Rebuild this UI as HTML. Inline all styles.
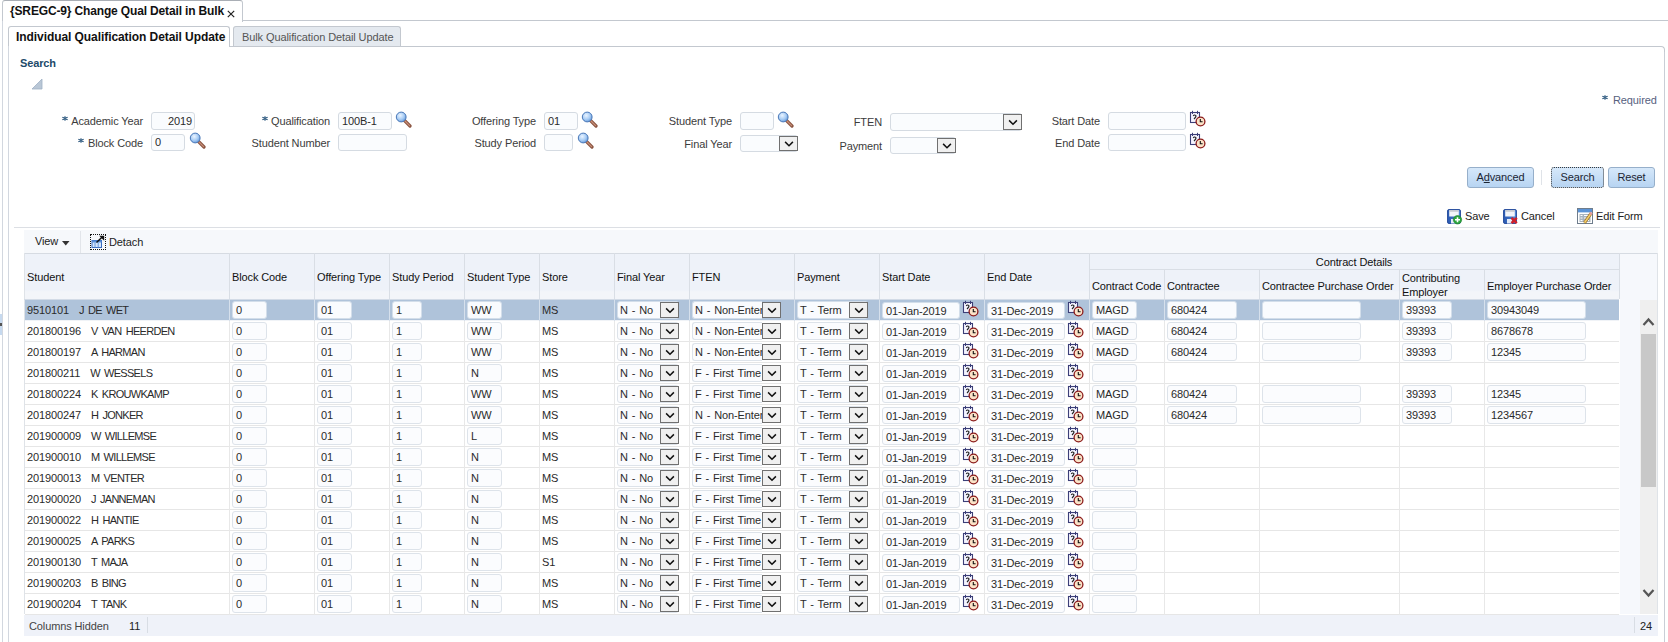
<!DOCTYPE html><html><head><meta charset="utf-8"><style>
*{box-sizing:border-box;margin:0;padding:0}
html,body{width:1668px;height:642px;overflow:hidden;background:#fff}
body{position:relative;font-family:"Liberation Sans",sans-serif;font-size:11px;color:#2a2a2a;letter-spacing:-0.12px}
.ab{position:absolute}
.t{position:absolute;white-space:nowrap;line-height:13px}
.lbl{position:absolute;white-space:nowrap;line-height:13px;color:#3c3c3c;text-align:right}
.star{color:#3a78a8}
.inp{position:absolute;border:1px solid #d5dbe2;border-radius:3px;background:#fafcfe}
.sel{position:absolute;border:1px solid #d5dbe2;border-radius:3px;background:#fafcfe}
.btn{position:absolute;border:1px solid #707070;background:#f0f0f0;border-radius:0}
.hl{position:absolute;height:1px}
.vl{position:absolute;width:1px}
.cbtn{position:absolute;border:1px solid #96afca;border-radius:3px;background:linear-gradient(#d6e8fa,#b7d4f2);color:#1c2533;text-align:center;line-height:19px;font-size:11px}
.hdr{position:absolute;white-space:nowrap;line-height:13px;color:#111}
.cell{position:absolute;white-space:nowrap;line-height:13px;color:#2a2a2a}
.ci{position:absolute;white-space:nowrap;overflow:hidden;border:1px solid #dde3ea;border-radius:3px;background:#fbfcfe;height:17px}
.sr .ci{background:#f9fbfe;border-color:#d3deea}
</style></head><body>
<div class="ab" style="left:2px;top:0;width:241px;height:22px;border:1px solid #c3c8cf;border-bottom:none;border-radius:3px 3px 0 0;border-top-color:#a9aeb5;background:#fff"></div>
<div class="hl" style="left:242px;top:20px;width:1426px;background:#c3c8cf"></div>
<div class="vl" style="left:2px;top:21px;height:621px;background:#d2d7df"></div>
<div class="t" style="left:10px;top:5px;font-weight:bold;font-size:12px;color:#111;letter-spacing:-0.15px">{SREGC-9} Change Qual Detail in Bulk</div>
<svg class="ab" style="left:227px;top:10px" width="8" height="8"><path d="M0.8 0.8 L7.2 7.2 M7.2 0.8 L0.8 7.2" stroke="#222" stroke-width="1.2"/></svg>
<div class="ab" style="left:8px;top:26px;width:222px;height:21px;border:1px solid #c3c8cf;border-bottom:none;border-radius:3px 3px 0 0;background:#fff"></div>
<div class="ab" style="left:233px;top:26px;width:168px;height:21px;border:1px solid #c3c8cf;border-bottom:none;border-radius:3px 3px 0 0;background:#e4e9ef"></div>
<div class="hl" style="left:229px;top:46px;width:1432px;background:#c3c8cf"></div>
<div class="ab" style="left:1656px;top:46px;width:9px;height:10px;border-top:1px solid #c3c8cf;border-right:1px solid #c3c8cf;border-radius:0 4px 0 0"></div>
<div class="vl" style="left:1664px;top:52px;height:590px;background:#c9ced6"></div>
<div class="vl" style="left:8px;top:46px;height:596px;background:#d2d7df"></div>
<div class="t" style="left:16px;top:31px;font-weight:bold;font-size:12px;color:#111;letter-spacing:-0.07px">Individual Qualification Detail Update</div>
<div class="t" style="left:242px;top:31px;color:#555;letter-spacing:-0.1px">Bulk Qualification Detail Update</div>
<div class="t" style="left:20px;top:57px;font-weight:bold;color:#1d4a6a">Search</div>
<svg class="ab" style="left:31px;top:78px" width="12" height="12"><path d="M11 1 L11 11 L1 11 Z" fill="#b9c7d6" stroke="#9fb1c5" stroke-width="0.8"/></svg>
<svg class="ab" style="left:1602px;top:95px" width="6" height="5" viewBox="0 0 6 5"><path d="M3 0.2 V4.8 M0.4 1.2 L5.6 3.8 M0.4 3.8 L5.6 1.2" stroke="#24527a" stroke-width="1.1"/></svg>
<div class="t" style="left:1613px;top:94px;color:#566180">Required</div>
<div class="lbl" style="right:1525px;top:115px"><svg width="6" height="5" style="margin-right:3.5px;vertical-align:4.5px" viewBox="0 0 6 5"><path d="M3 0.2 V4.8 M0.4 1.2 L5.6 3.8 M0.4 3.8 L5.6 1.2" stroke="#24527a" stroke-width="1.1"/></svg>Academic Year</div>
<div class="inp" style="left:151px;top:112px;width:44px;height:18px;line-height:16px;padding-right:2px;text-align:right;color:#2a2a2a">2019</div>
<div class="lbl" style="right:1525px;top:137px"><svg width="6" height="5" style="margin-right:3.5px;vertical-align:4.5px" viewBox="0 0 6 5"><path d="M3 0.2 V4.8 M0.4 1.2 L5.6 3.8 M0.4 3.8 L5.6 1.2" stroke="#24527a" stroke-width="1.1"/></svg>Block Code</div>
<div class="inp" style="left:151px;top:134px;width:34px;height:17px;line-height:15px;padding-left:3px;color:#2a2a2a">0</div>
<svg class="ab" style="left:189px;top:132px" width="17" height="17" viewBox="0 0 17 17"><defs><radialGradient id="lg1" cx="40%" cy="35%" r="65%"><stop offset="0" stop-color="#eaf4ff"/><stop offset="0.6" stop-color="#a9cdf5"/><stop offset="1" stop-color="#6d9fdc"/></radialGradient></defs><line x1="9.5" y1="9.5" x2="15" y2="15" stroke="#8a5440" stroke-width="3.2" stroke-linecap="round"/><line x1="10" y1="10" x2="14.6" y2="14.6" stroke="#c9907a" stroke-width="1.2" stroke-linecap="round"/><circle cx="6.2" cy="6" r="4.9" fill="url(#lg1)" stroke="#4a78b8" stroke-width="1"/></svg>
<div class="lbl" style="right:1338px;top:115px"><svg width="6" height="5" style="margin-right:3.5px;vertical-align:4.5px" viewBox="0 0 6 5"><path d="M3 0.2 V4.8 M0.4 1.2 L5.6 3.8 M0.4 3.8 L5.6 1.2" stroke="#24527a" stroke-width="1.1"/></svg>Qualification</div>
<div class="inp" style="left:338px;top:112px;width:54px;height:18px;line-height:16px;padding-left:3px;color:#2a2a2a">100B-1</div>
<svg class="ab" style="left:395px;top:111px" width="17" height="17" viewBox="0 0 17 17"><defs><radialGradient id="lg2" cx="40%" cy="35%" r="65%"><stop offset="0" stop-color="#eaf4ff"/><stop offset="0.6" stop-color="#a9cdf5"/><stop offset="1" stop-color="#6d9fdc"/></radialGradient></defs><line x1="9.5" y1="9.5" x2="15" y2="15" stroke="#8a5440" stroke-width="3.2" stroke-linecap="round"/><line x1="10" y1="10" x2="14.6" y2="14.6" stroke="#c9907a" stroke-width="1.2" stroke-linecap="round"/><circle cx="6.2" cy="6" r="4.9" fill="url(#lg2)" stroke="#4a78b8" stroke-width="1"/></svg>
<div class="lbl" style="right:1338px;top:137px">Student Number</div>
<div class="inp" style="left:338px;top:134px;width:69px;height:17px;line-height:15px;padding-left:3px;color:#2a2a2a"></div>
<div class="lbl" style="right:1132px;top:115px">Offering Type</div>
<div class="inp" style="left:544px;top:112px;width:34px;height:18px;line-height:16px;padding-left:3px;color:#2a2a2a">01</div>
<svg class="ab" style="left:581px;top:111px" width="17" height="17" viewBox="0 0 17 17"><defs><radialGradient id="lg3" cx="40%" cy="35%" r="65%"><stop offset="0" stop-color="#eaf4ff"/><stop offset="0.6" stop-color="#a9cdf5"/><stop offset="1" stop-color="#6d9fdc"/></radialGradient></defs><line x1="9.5" y1="9.5" x2="15" y2="15" stroke="#8a5440" stroke-width="3.2" stroke-linecap="round"/><line x1="10" y1="10" x2="14.6" y2="14.6" stroke="#c9907a" stroke-width="1.2" stroke-linecap="round"/><circle cx="6.2" cy="6" r="4.9" fill="url(#lg3)" stroke="#4a78b8" stroke-width="1"/></svg>
<div class="lbl" style="right:1132px;top:137px">Study Period</div>
<div class="inp" style="left:544px;top:134px;width:29px;height:17px;line-height:15px;padding-left:3px;color:#2a2a2a"></div>
<svg class="ab" style="left:577px;top:132px" width="17" height="17" viewBox="0 0 17 17"><defs><radialGradient id="lg4" cx="40%" cy="35%" r="65%"><stop offset="0" stop-color="#eaf4ff"/><stop offset="0.6" stop-color="#a9cdf5"/><stop offset="1" stop-color="#6d9fdc"/></radialGradient></defs><line x1="9.5" y1="9.5" x2="15" y2="15" stroke="#8a5440" stroke-width="3.2" stroke-linecap="round"/><line x1="10" y1="10" x2="14.6" y2="14.6" stroke="#c9907a" stroke-width="1.2" stroke-linecap="round"/><circle cx="6.2" cy="6" r="4.9" fill="url(#lg4)" stroke="#4a78b8" stroke-width="1"/></svg>
<div class="lbl" style="right:936px;top:115px">Student Type</div>
<div class="inp" style="left:740px;top:112px;width:34px;height:18px;line-height:16px;padding-left:3px;color:#2a2a2a"></div>
<svg class="ab" style="left:777px;top:111px" width="17" height="17" viewBox="0 0 17 17"><defs><radialGradient id="lg5" cx="40%" cy="35%" r="65%"><stop offset="0" stop-color="#eaf4ff"/><stop offset="0.6" stop-color="#a9cdf5"/><stop offset="1" stop-color="#6d9fdc"/></radialGradient></defs><line x1="9.5" y1="9.5" x2="15" y2="15" stroke="#8a5440" stroke-width="3.2" stroke-linecap="round"/><line x1="10" y1="10" x2="14.6" y2="14.6" stroke="#c9907a" stroke-width="1.2" stroke-linecap="round"/><circle cx="6.2" cy="6" r="4.9" fill="url(#lg5)" stroke="#4a78b8" stroke-width="1"/></svg>
<div class="lbl" style="right:936px;top:138px">Final Year</div>
<div class="sel" style="left:740px;top:135px;width:58px;height:17px"></div>
<div class="btn" style="left:779px;top:136px;width:19px;height:15px"><svg width="17" height="13" style="position:absolute;left:0;top:0"><polyline points="5.1,4.9 9.0,8.7 12.9,4.9" fill="none" stroke="#111" stroke-width="1.5"/></svg></div>
<div class="lbl" style="right:786px;top:116px">FTEN</div>
<div class="sel" style="left:890px;top:113px;width:132px;height:18px"></div>
<div class="btn" style="left:1003px;top:114px;width:19px;height:16px"><svg width="17" height="14" style="position:absolute;left:0;top:0"><polyline points="5.1,5.4 9.0,9.2 12.9,5.4" fill="none" stroke="#111" stroke-width="1.5"/></svg></div>
<div class="lbl" style="right:786px;top:140px">Payment</div>
<div class="sel" style="left:890px;top:137px;width:66px;height:17px"></div>
<div class="btn" style="left:937px;top:138px;width:19px;height:15px"><svg width="17" height="13" style="position:absolute;left:0;top:0"><polyline points="5.1,4.9 9.0,8.7 12.9,4.9" fill="none" stroke="#111" stroke-width="1.5"/></svg></div>
<div class="lbl" style="right:568px;top:115px">Start Date</div>
<div class="inp" style="left:1108px;top:112px;width:78px;height:18px;line-height:16px;padding-left:3px;color:#2a2a2a"></div>
<svg class="ab" style="left:1189px;top:110px" width="17" height="17" viewBox="0 0 17 17"><rect x="1.5" y="2.5" width="9" height="10" fill="#f4f4ff" stroke="#3c3f78" stroke-width="1.1"/><line x1="3.5" y1="0.8" x2="3.5" y2="4" stroke="#3c3f78" stroke-width="1"/><line x1="8.5" y1="0.8" x2="8.5" y2="4" stroke="#3c3f78" stroke-width="1"/><path d="M4.2 6 Q5.5 4.3 6.9 5.6 Q7.4 6.8 5 9" fill="none" stroke="#222" stroke-width="1.1"/><circle cx="11.5" cy="11.5" r="4.4" fill="#fbe3c8" stroke="#8b1a1a" stroke-width="1.3"/><path d="M11.3 9 V11.8 H13.6" fill="none" stroke="#111" stroke-width="1.1"/></svg>
<div class="lbl" style="right:568px;top:137px">End Date</div>
<div class="inp" style="left:1108px;top:134px;width:78px;height:17px;line-height:15px;padding-left:3px;color:#2a2a2a"></div>
<svg class="ab" style="left:1189px;top:132px" width="17" height="17" viewBox="0 0 17 17"><rect x="1.5" y="2.5" width="9" height="10" fill="#f4f4ff" stroke="#3c3f78" stroke-width="1.1"/><line x1="3.5" y1="0.8" x2="3.5" y2="4" stroke="#3c3f78" stroke-width="1"/><line x1="8.5" y1="0.8" x2="8.5" y2="4" stroke="#3c3f78" stroke-width="1"/><path d="M4.2 6 Q5.5 4.3 6.9 5.6 Q7.4 6.8 5 9" fill="none" stroke="#222" stroke-width="1.1"/><circle cx="11.5" cy="11.5" r="4.4" fill="#fbe3c8" stroke="#8b1a1a" stroke-width="1.3"/><path d="M11.3 9 V11.8 H13.6" fill="none" stroke="#111" stroke-width="1.1"/></svg>
<div class="cbtn" style="left:1467px;top:167px;width:67px;height:21px">A<u>d</u>vanced</div>
<div class="vl" style="left:1541px;top:170px;height:15px;background:#dfe3e8"></div>
<div class="cbtn" style="left:1551px;top:167px;width:53px;height:21px;border:1px dotted #3a3a3a">Search</div>
<div class="cbtn" style="left:1608px;top:167px;width:47px;height:21px">Reset</div>
<svg class="ab" style="left:1447px;top:209px" width="16" height="16" viewBox="0 0 16 16"><defs><linearGradient id="fgsave" x1="0" x2="1"><stop offset="0" stop-color="#2a58b0"/><stop offset="1" stop-color="#4f86d6"/></linearGradient></defs><rect x="0.5" y="0.5" width="13" height="14" rx="1.5" fill="url(#fgsave)" stroke="#23489a" stroke-width="0.9"/><rect x="2.2" y="1.2" width="9.6" height="6.3" fill="#f2f5fa"/><rect x="2.2" y="1.2" width="9.6" height="1.5" fill="#c4c7cc"/><rect x="4" y="10" width="5" height="4.5" fill="#e4ecf8"/><circle cx="10.5" cy="10.8" r="4.2" fill="#2aa43c" stroke="#1d7f2c" stroke-width="0.6"/><path d="M10.5 8.3 V13.3 M8 10.8 H13" stroke="#fff" stroke-width="1.6"/></svg>
<div class="t" style="left:1465px;top:210px;color:#222">Save</div>
<svg class="ab" style="left:1503px;top:209px" width="16" height="16" viewBox="0 0 16 16"><defs><linearGradient id="fgcancel" x1="0" x2="1"><stop offset="0" stop-color="#2a58b0"/><stop offset="1" stop-color="#4f86d6"/></linearGradient></defs><rect x="0.5" y="0.5" width="13" height="14" rx="1.5" fill="url(#fgcancel)" stroke="#23489a" stroke-width="0.9"/><rect x="2.2" y="1.2" width="9.6" height="6.3" fill="#f2f5fa"/><rect x="2.2" y="1.2" width="9.6" height="1.5" fill="#c4c7cc"/><rect x="4" y="10" width="5" height="4.5" fill="#e4ecf8"/><path d="M8.5 8.8 L13.8 14.2 M13.8 8.8 L8.5 14.2" stroke="#d0202a" stroke-width="2.4"/></svg>
<div class="t" style="left:1521px;top:210px;color:#222">Cancel</div>
<svg class="ab" style="left:1577px;top:208px" width="17" height="17" viewBox="0 0 17 17"><rect x="0.5" y="0.5" width="15" height="15" fill="#fff" stroke="#6f7d8c"/><rect x="1" y="1" width="14" height="3.4" fill="#5b93d6"/><rect x="2.5" y="6" width="11" height="8" fill="#a8b3be"/><path d="M3.5 7.5 H5.5 M7 7.5 H12 M3.5 10 H5.5 M7 10 H12 M3.5 12.5 H5.5 M7 12.5 H12" stroke="#fff" stroke-width="1.2"/><path d="M7.5 14.8 L14.2 5.2" stroke="#9a6a20" stroke-width="3"/><path d="M7.5 14.8 L14.2 5.2" stroke="#f2cf6a" stroke-width="1.6"/><path d="M13.2 6.6 L14.6 4.6" stroke="#e59a9a" stroke-width="2.6"/></svg>
<div class="t" style="left:1596px;top:210px;color:#222">Edit Form</div>
<div class="hl" style="left:14px;top:227px;width:1646px;background:#dcdfe4"></div>
<div class="ab" style="left:24px;top:230px;width:1634px;height:23px;background:#f6f8fb"></div>
<div class="t" style="left:35px;top:235px;color:#222">View</div>
<svg class="ab" style="left:62px;top:241px" width="8" height="5"><path d="M0 0 H7.5 L3.75 4.5 Z" fill="#333"/></svg>
<div class="vl" style="left:80px;top:231px;height:22px;background:#e2e5ea"></div>
<div class="ab" style="left:90px;top:234px;width:16px;height:16px;border:1px dotted #111"></div>
<svg class="ab" style="left:90px;top:234px" width="16" height="16" viewBox="0 0 16 16"><rect x="2" y="6.5" width="9.5" height="7" fill="#d6e6fb" stroke="#3a6cc0" stroke-width="1"/><rect x="2" y="6.5" width="9.5" height="2" fill="#5a8fd8"/><path d="M5 8.5 V13.5 M8.2 8.5 V13.5" stroke="#5a8fd8" stroke-width="0.9"/><path d="M6.5 8.5 L12.5 2.8" stroke="#111" stroke-width="1.5"/><path d="M9.2 1.8 L14.2 1.8 L14.2 6.8 Z" fill="#111"/></svg>
<div class="t" style="left:109px;top:236px;color:#222">Detach</div>
<div class="ab" style="left:24px;top:253px;width:1596px;height:46px;background:linear-gradient(#eef2f9 0,#eef2f9 80%,#f3f5f9 84%,#f3f5f9 100%);border-top:1px solid #d6dbe2"></div>
<div class="ab" style="left:1620px;top:253px;width:38px;height:361px;background:#f6f8fc;border-top:1px solid #d6dbe2"></div>
<div class="vl" style="left:24px;top:253px;height:361px;background:#dfe3e8"></div>
<div class="vl" style="left:1657px;top:253px;height:361px;background:#dfe3e8"></div>
<div class="vl" style="left:229px;top:253px;height:46px;background:#d9dee5"></div>
<div class="vl" style="left:314px;top:253px;height:46px;background:#d9dee5"></div>
<div class="vl" style="left:389px;top:253px;height:46px;background:#d9dee5"></div>
<div class="vl" style="left:464px;top:253px;height:46px;background:#d9dee5"></div>
<div class="vl" style="left:539px;top:253px;height:46px;background:#d9dee5"></div>
<div class="vl" style="left:614px;top:253px;height:46px;background:#d9dee5"></div>
<div class="vl" style="left:689px;top:253px;height:46px;background:#d9dee5"></div>
<div class="vl" style="left:794px;top:253px;height:46px;background:#d9dee5"></div>
<div class="vl" style="left:879px;top:253px;height:46px;background:#d9dee5"></div>
<div class="vl" style="left:984px;top:253px;height:46px;background:#d9dee5"></div>
<div class="vl" style="left:1089px;top:253px;height:46px;background:#d9dee5"></div>
<div class="vl" style="left:1164px;top:269px;height:30px;background:#d9dee5"></div>
<div class="vl" style="left:1259px;top:269px;height:30px;background:#d9dee5"></div>
<div class="vl" style="left:1399px;top:269px;height:30px;background:#d9dee5"></div>
<div class="vl" style="left:1484px;top:269px;height:30px;background:#d9dee5"></div>
<div class="vl" style="left:1619px;top:253px;height:46px;background:#d9dee5"></div>
<div class="hl" style="left:1089px;top:269px;width:530px;background:#d9dee5"></div>
<div class="hl" style="left:24px;top:299px;width:1595px;background:#d3dbe6"></div>
<div class="hdr" style="left:27px;top:271px">Student</div>
<div class="hdr" style="left:232px;top:271px">Block Code</div>
<div class="hdr" style="left:317px;top:271px">Offering Type</div>
<div class="hdr" style="left:392px;top:271px">Study Period</div>
<div class="hdr" style="left:467px;top:271px">Student Type</div>
<div class="hdr" style="left:542px;top:271px">Store</div>
<div class="hdr" style="left:617px;top:271px">Final Year</div>
<div class="hdr" style="left:692px;top:271px">FTEN</div>
<div class="hdr" style="left:797px;top:271px">Payment</div>
<div class="hdr" style="left:882px;top:271px">Start Date</div>
<div class="hdr" style="left:987px;top:271px">End Date</div>
<div class="hdr" style="left:1089px;width:530px;text-align:center;top:256px">Contract Details</div>
<div class="hdr" style="left:1092px;top:280px">Contract Code</div>
<div class="hdr" style="left:1167px;top:280px">Contractee</div>
<div class="hdr" style="left:1262px;top:280px">Contractee Purchase Order</div>
<div class="hdr" style="left:1487px;top:280px">Employer Purchase Order</div>
<div class="hdr" style="left:1402px;top:272px;line-height:13.5px">Contributing<br>Employer</div>
<div class="sr ab" style="left:25px;top:300px;width:1594px;height:21px;background:#afc3da">
<div class="hl" style="left:0;top:20px;width:1594px;background:#f0f3f7"></div>
<div class="vl" style="left:204px;top:0;height:21px;background:#d6e0ec"></div>
<div class="vl" style="left:289px;top:0;height:21px;background:#d6e0ec"></div>
<div class="vl" style="left:364px;top:0;height:21px;background:#d6e0ec"></div>
<div class="vl" style="left:439px;top:0;height:21px;background:#d6e0ec"></div>
<div class="vl" style="left:514px;top:0;height:21px;background:#d6e0ec"></div>
<div class="vl" style="left:589px;top:0;height:21px;background:#d6e0ec"></div>
<div class="vl" style="left:664px;top:0;height:21px;background:#d6e0ec"></div>
<div class="vl" style="left:769px;top:0;height:21px;background:#d6e0ec"></div>
<div class="vl" style="left:854px;top:0;height:21px;background:#d6e0ec"></div>
<div class="vl" style="left:959px;top:0;height:21px;background:#d6e0ec"></div>
<div class="vl" style="left:1064px;top:0;height:21px;background:#d6e0ec"></div>
<div class="vl" style="left:1139px;top:0;height:21px;background:#d6e0ec"></div>
<div class="vl" style="left:1234px;top:0;height:21px;background:#d6e0ec"></div>
<div class="vl" style="left:1374px;top:0;height:21px;background:#d6e0ec"></div>
<div class="vl" style="left:1459px;top:0;height:21px;background:#d6e0ec"></div>
<div class="cell" style="left:2px;top:4px">9510101<span style="margin-left:10px;letter-spacing:-0.7px;word-spacing:1.8px">J DE WET</span></div>
<div class="ci" style="left:207px;top:1px;width:35px;height:18px;padding-left:3px;line-height:17px">0</div>
<div class="ci" style="left:292px;top:1px;width:35px;height:18px;padding-left:3px;line-height:17px">01</div>
<div class="ci" style="left:367px;top:1px;width:30px;height:18px;padding-left:3px;line-height:17px">1</div>
<div class="ci" style="left:442px;top:1px;width:35px;height:18px;padding-left:3px;line-height:17px">WW</div>
<div class="cell" style="left:517px;top:4px">MS</div>
<div class="ci" style="left:592px;top:1px;width:62px;height:18px;padding-left:2px;line-height:17px;overflow:hidden;word-spacing:1px">N - No</div>
<div class="btn" style="left:635px;top:2px;width:19px;height:16px"><svg width="17" height="14" style="position:absolute;left:0;top:0"><polyline points="5.1,5.4 9.0,9.2 12.9,5.4" fill="none" stroke="#111" stroke-width="1.5"/></svg></div>
<div class="ci" style="left:667px;top:1px;width:70px;height:18px;padding-left:2px;line-height:17px;word-spacing:1px;overflow:hidden;border-right:none;border-radius:3px 0 0 3px">N - Non-Enter</div>
<div class="btn" style="left:737px;top:2px;width:19px;height:16px"><svg width="17" height="14" style="position:absolute;left:0;top:0"><polyline points="5.1,5.4 9.0,9.2 12.9,5.4" fill="none" stroke="#111" stroke-width="1.5"/></svg></div>
<div class="ci" style="left:772px;top:1px;width:71px;height:18px;padding-left:2px;line-height:17px;overflow:hidden;word-spacing:1px">T - Term</div>
<div class="btn" style="left:824px;top:2px;width:19px;height:16px"><svg width="17" height="14" style="position:absolute;left:0;top:0"><polyline points="5.1,5.4 9.0,9.2 12.9,5.4" fill="none" stroke="#111" stroke-width="1.5"/></svg></div>
<div class="ci" style="left:857px;top:2px;width:78px;height:17px;padding-left:3px;line-height:17px">01-Jan-2019</div>
<svg class="ab" style="left:937px;top:0px" width="17" height="17" viewBox="0 0 17 17"><rect x="1.5" y="2.5" width="9" height="10" fill="#f4f4ff" stroke="#3c3f78" stroke-width="1.1"/><line x1="3.5" y1="0.8" x2="3.5" y2="4" stroke="#3c3f78" stroke-width="1"/><line x1="8.5" y1="0.8" x2="8.5" y2="4" stroke="#3c3f78" stroke-width="1"/><path d="M4.2 6 Q5.5 4.3 6.9 5.6 Q7.4 6.8 5 9" fill="none" stroke="#222" stroke-width="1.1"/><circle cx="11.5" cy="11.5" r="4.4" fill="#fbe3c8" stroke="#8b1a1a" stroke-width="1.3"/><path d="M11.3 9 V11.8 H13.6" fill="none" stroke="#111" stroke-width="1.1"/></svg>
<div class="ci" style="left:962px;top:2px;width:78px;height:17px;padding-left:3px;line-height:17px">31-Dec-2019</div>
<svg class="ab" style="left:1042px;top:0px" width="17" height="17" viewBox="0 0 17 17"><rect x="1.5" y="2.5" width="9" height="10" fill="#f4f4ff" stroke="#3c3f78" stroke-width="1.1"/><line x1="3.5" y1="0.8" x2="3.5" y2="4" stroke="#3c3f78" stroke-width="1"/><line x1="8.5" y1="0.8" x2="8.5" y2="4" stroke="#3c3f78" stroke-width="1"/><path d="M4.2 6 Q5.5 4.3 6.9 5.6 Q7.4 6.8 5 9" fill="none" stroke="#222" stroke-width="1.1"/><circle cx="11.5" cy="11.5" r="4.4" fill="#fbe3c8" stroke="#8b1a1a" stroke-width="1.3"/><path d="M11.3 9 V11.8 H13.6" fill="none" stroke="#111" stroke-width="1.1"/></svg>
<div class="ci" style="left:1067px;top:1px;width:45px;height:18px;padding-left:3px;line-height:17px">MAGD</div>
<div class="ci" style="left:1142px;top:1px;width:70px;height:18px;padding-left:3px;line-height:17px">680424</div>
<div class="ci" style="left:1237px;top:1px;width:99px;height:18px;padding-left:3px;line-height:17px"></div>
<div class="ci" style="left:1377px;top:1px;width:50px;height:18px;padding-left:3px;line-height:17px">39393</div>
<div class="ci" style="left:1462px;top:1px;width:99px;height:18px;padding-left:3px;line-height:17px">30943049</div>
</div>
<div class="ab" style="left:25px;top:321px;width:1594px;height:21px;background:#fff">
<div class="hl" style="left:0;top:20px;width:1594px;background:#e6e6e6"></div>
<div class="vl" style="left:204px;top:0;height:21px;background:#e8e8e8"></div>
<div class="vl" style="left:289px;top:0;height:21px;background:#e8e8e8"></div>
<div class="vl" style="left:364px;top:0;height:21px;background:#e8e8e8"></div>
<div class="vl" style="left:439px;top:0;height:21px;background:#e8e8e8"></div>
<div class="vl" style="left:514px;top:0;height:21px;background:#e8e8e8"></div>
<div class="vl" style="left:589px;top:0;height:21px;background:#e8e8e8"></div>
<div class="vl" style="left:664px;top:0;height:21px;background:#e8e8e8"></div>
<div class="vl" style="left:769px;top:0;height:21px;background:#e8e8e8"></div>
<div class="vl" style="left:854px;top:0;height:21px;background:#e8e8e8"></div>
<div class="vl" style="left:959px;top:0;height:21px;background:#e8e8e8"></div>
<div class="vl" style="left:1064px;top:0;height:21px;background:#e8e8e8"></div>
<div class="vl" style="left:1139px;top:0;height:21px;background:#e8e8e8"></div>
<div class="vl" style="left:1234px;top:0;height:21px;background:#e8e8e8"></div>
<div class="vl" style="left:1374px;top:0;height:21px;background:#e8e8e8"></div>
<div class="vl" style="left:1459px;top:0;height:21px;background:#e8e8e8"></div>
<div class="cell" style="left:2px;top:4px">201800196<span style="margin-left:10px;letter-spacing:-0.7px;word-spacing:1.8px">V VAN HEERDEN</span></div>
<div class="ci" style="left:207px;top:1px;width:35px;height:18px;padding-left:3px;line-height:17px">0</div>
<div class="ci" style="left:292px;top:1px;width:35px;height:18px;padding-left:3px;line-height:17px">01</div>
<div class="ci" style="left:367px;top:1px;width:30px;height:18px;padding-left:3px;line-height:17px">1</div>
<div class="ci" style="left:442px;top:1px;width:35px;height:18px;padding-left:3px;line-height:17px">WW</div>
<div class="cell" style="left:517px;top:4px">MS</div>
<div class="ci" style="left:592px;top:1px;width:62px;height:18px;padding-left:2px;line-height:17px;overflow:hidden;word-spacing:1px">N - No</div>
<div class="btn" style="left:635px;top:2px;width:19px;height:16px"><svg width="17" height="14" style="position:absolute;left:0;top:0"><polyline points="5.1,5.4 9.0,9.2 12.9,5.4" fill="none" stroke="#111" stroke-width="1.5"/></svg></div>
<div class="ci" style="left:667px;top:1px;width:70px;height:18px;padding-left:2px;line-height:17px;word-spacing:1px;overflow:hidden;border-right:none;border-radius:3px 0 0 3px">N - Non-Enter</div>
<div class="btn" style="left:737px;top:2px;width:19px;height:16px"><svg width="17" height="14" style="position:absolute;left:0;top:0"><polyline points="5.1,5.4 9.0,9.2 12.9,5.4" fill="none" stroke="#111" stroke-width="1.5"/></svg></div>
<div class="ci" style="left:772px;top:1px;width:71px;height:18px;padding-left:2px;line-height:17px;overflow:hidden;word-spacing:1px">T - Term</div>
<div class="btn" style="left:824px;top:2px;width:19px;height:16px"><svg width="17" height="14" style="position:absolute;left:0;top:0"><polyline points="5.1,5.4 9.0,9.2 12.9,5.4" fill="none" stroke="#111" stroke-width="1.5"/></svg></div>
<div class="ci" style="left:857px;top:2px;width:78px;height:17px;padding-left:3px;line-height:17px">01-Jan-2019</div>
<svg class="ab" style="left:937px;top:0px" width="17" height="17" viewBox="0 0 17 17"><rect x="1.5" y="2.5" width="9" height="10" fill="#f4f4ff" stroke="#3c3f78" stroke-width="1.1"/><line x1="3.5" y1="0.8" x2="3.5" y2="4" stroke="#3c3f78" stroke-width="1"/><line x1="8.5" y1="0.8" x2="8.5" y2="4" stroke="#3c3f78" stroke-width="1"/><path d="M4.2 6 Q5.5 4.3 6.9 5.6 Q7.4 6.8 5 9" fill="none" stroke="#222" stroke-width="1.1"/><circle cx="11.5" cy="11.5" r="4.4" fill="#fbe3c8" stroke="#8b1a1a" stroke-width="1.3"/><path d="M11.3 9 V11.8 H13.6" fill="none" stroke="#111" stroke-width="1.1"/></svg>
<div class="ci" style="left:962px;top:2px;width:78px;height:17px;padding-left:3px;line-height:17px">31-Dec-2019</div>
<svg class="ab" style="left:1042px;top:0px" width="17" height="17" viewBox="0 0 17 17"><rect x="1.5" y="2.5" width="9" height="10" fill="#f4f4ff" stroke="#3c3f78" stroke-width="1.1"/><line x1="3.5" y1="0.8" x2="3.5" y2="4" stroke="#3c3f78" stroke-width="1"/><line x1="8.5" y1="0.8" x2="8.5" y2="4" stroke="#3c3f78" stroke-width="1"/><path d="M4.2 6 Q5.5 4.3 6.9 5.6 Q7.4 6.8 5 9" fill="none" stroke="#222" stroke-width="1.1"/><circle cx="11.5" cy="11.5" r="4.4" fill="#fbe3c8" stroke="#8b1a1a" stroke-width="1.3"/><path d="M11.3 9 V11.8 H13.6" fill="none" stroke="#111" stroke-width="1.1"/></svg>
<div class="ci" style="left:1067px;top:1px;width:45px;height:18px;padding-left:3px;line-height:17px">MAGD</div>
<div class="ci" style="left:1142px;top:1px;width:70px;height:18px;padding-left:3px;line-height:17px">680424</div>
<div class="ci" style="left:1237px;top:1px;width:99px;height:18px;padding-left:3px;line-height:17px"></div>
<div class="ci" style="left:1377px;top:1px;width:50px;height:18px;padding-left:3px;line-height:17px">39393</div>
<div class="ci" style="left:1462px;top:1px;width:99px;height:18px;padding-left:3px;line-height:17px">8678678</div>
</div>
<div class="ab" style="left:25px;top:342px;width:1594px;height:21px;background:#fff">
<div class="hl" style="left:0;top:20px;width:1594px;background:#e6e6e6"></div>
<div class="vl" style="left:204px;top:0;height:21px;background:#e8e8e8"></div>
<div class="vl" style="left:289px;top:0;height:21px;background:#e8e8e8"></div>
<div class="vl" style="left:364px;top:0;height:21px;background:#e8e8e8"></div>
<div class="vl" style="left:439px;top:0;height:21px;background:#e8e8e8"></div>
<div class="vl" style="left:514px;top:0;height:21px;background:#e8e8e8"></div>
<div class="vl" style="left:589px;top:0;height:21px;background:#e8e8e8"></div>
<div class="vl" style="left:664px;top:0;height:21px;background:#e8e8e8"></div>
<div class="vl" style="left:769px;top:0;height:21px;background:#e8e8e8"></div>
<div class="vl" style="left:854px;top:0;height:21px;background:#e8e8e8"></div>
<div class="vl" style="left:959px;top:0;height:21px;background:#e8e8e8"></div>
<div class="vl" style="left:1064px;top:0;height:21px;background:#e8e8e8"></div>
<div class="vl" style="left:1139px;top:0;height:21px;background:#e8e8e8"></div>
<div class="vl" style="left:1234px;top:0;height:21px;background:#e8e8e8"></div>
<div class="vl" style="left:1374px;top:0;height:21px;background:#e8e8e8"></div>
<div class="vl" style="left:1459px;top:0;height:21px;background:#e8e8e8"></div>
<div class="cell" style="left:2px;top:4px">201800197<span style="margin-left:10px;letter-spacing:-0.7px;word-spacing:1.8px">A HARMAN</span></div>
<div class="ci" style="left:207px;top:1px;width:35px;height:18px;padding-left:3px;line-height:17px">0</div>
<div class="ci" style="left:292px;top:1px;width:35px;height:18px;padding-left:3px;line-height:17px">01</div>
<div class="ci" style="left:367px;top:1px;width:30px;height:18px;padding-left:3px;line-height:17px">1</div>
<div class="ci" style="left:442px;top:1px;width:35px;height:18px;padding-left:3px;line-height:17px">WW</div>
<div class="cell" style="left:517px;top:4px">MS</div>
<div class="ci" style="left:592px;top:1px;width:62px;height:18px;padding-left:2px;line-height:17px;overflow:hidden;word-spacing:1px">N - No</div>
<div class="btn" style="left:635px;top:2px;width:19px;height:16px"><svg width="17" height="14" style="position:absolute;left:0;top:0"><polyline points="5.1,5.4 9.0,9.2 12.9,5.4" fill="none" stroke="#111" stroke-width="1.5"/></svg></div>
<div class="ci" style="left:667px;top:1px;width:70px;height:18px;padding-left:2px;line-height:17px;word-spacing:1px;overflow:hidden;border-right:none;border-radius:3px 0 0 3px">N - Non-Enter</div>
<div class="btn" style="left:737px;top:2px;width:19px;height:16px"><svg width="17" height="14" style="position:absolute;left:0;top:0"><polyline points="5.1,5.4 9.0,9.2 12.9,5.4" fill="none" stroke="#111" stroke-width="1.5"/></svg></div>
<div class="ci" style="left:772px;top:1px;width:71px;height:18px;padding-left:2px;line-height:17px;overflow:hidden;word-spacing:1px">T - Term</div>
<div class="btn" style="left:824px;top:2px;width:19px;height:16px"><svg width="17" height="14" style="position:absolute;left:0;top:0"><polyline points="5.1,5.4 9.0,9.2 12.9,5.4" fill="none" stroke="#111" stroke-width="1.5"/></svg></div>
<div class="ci" style="left:857px;top:2px;width:78px;height:17px;padding-left:3px;line-height:17px">01-Jan-2019</div>
<svg class="ab" style="left:937px;top:0px" width="17" height="17" viewBox="0 0 17 17"><rect x="1.5" y="2.5" width="9" height="10" fill="#f4f4ff" stroke="#3c3f78" stroke-width="1.1"/><line x1="3.5" y1="0.8" x2="3.5" y2="4" stroke="#3c3f78" stroke-width="1"/><line x1="8.5" y1="0.8" x2="8.5" y2="4" stroke="#3c3f78" stroke-width="1"/><path d="M4.2 6 Q5.5 4.3 6.9 5.6 Q7.4 6.8 5 9" fill="none" stroke="#222" stroke-width="1.1"/><circle cx="11.5" cy="11.5" r="4.4" fill="#fbe3c8" stroke="#8b1a1a" stroke-width="1.3"/><path d="M11.3 9 V11.8 H13.6" fill="none" stroke="#111" stroke-width="1.1"/></svg>
<div class="ci" style="left:962px;top:2px;width:78px;height:17px;padding-left:3px;line-height:17px">31-Dec-2019</div>
<svg class="ab" style="left:1042px;top:0px" width="17" height="17" viewBox="0 0 17 17"><rect x="1.5" y="2.5" width="9" height="10" fill="#f4f4ff" stroke="#3c3f78" stroke-width="1.1"/><line x1="3.5" y1="0.8" x2="3.5" y2="4" stroke="#3c3f78" stroke-width="1"/><line x1="8.5" y1="0.8" x2="8.5" y2="4" stroke="#3c3f78" stroke-width="1"/><path d="M4.2 6 Q5.5 4.3 6.9 5.6 Q7.4 6.8 5 9" fill="none" stroke="#222" stroke-width="1.1"/><circle cx="11.5" cy="11.5" r="4.4" fill="#fbe3c8" stroke="#8b1a1a" stroke-width="1.3"/><path d="M11.3 9 V11.8 H13.6" fill="none" stroke="#111" stroke-width="1.1"/></svg>
<div class="ci" style="left:1067px;top:1px;width:45px;height:18px;padding-left:3px;line-height:17px">MAGD</div>
<div class="ci" style="left:1142px;top:1px;width:70px;height:18px;padding-left:3px;line-height:17px">680424</div>
<div class="ci" style="left:1237px;top:1px;width:99px;height:18px;padding-left:3px;line-height:17px"></div>
<div class="ci" style="left:1377px;top:1px;width:50px;height:18px;padding-left:3px;line-height:17px">39393</div>
<div class="ci" style="left:1462px;top:1px;width:99px;height:18px;padding-left:3px;line-height:17px">12345</div>
</div>
<div class="ab" style="left:25px;top:363px;width:1594px;height:21px;background:#fff">
<div class="hl" style="left:0;top:20px;width:1594px;background:#e6e6e6"></div>
<div class="vl" style="left:204px;top:0;height:21px;background:#e8e8e8"></div>
<div class="vl" style="left:289px;top:0;height:21px;background:#e8e8e8"></div>
<div class="vl" style="left:364px;top:0;height:21px;background:#e8e8e8"></div>
<div class="vl" style="left:439px;top:0;height:21px;background:#e8e8e8"></div>
<div class="vl" style="left:514px;top:0;height:21px;background:#e8e8e8"></div>
<div class="vl" style="left:589px;top:0;height:21px;background:#e8e8e8"></div>
<div class="vl" style="left:664px;top:0;height:21px;background:#e8e8e8"></div>
<div class="vl" style="left:769px;top:0;height:21px;background:#e8e8e8"></div>
<div class="vl" style="left:854px;top:0;height:21px;background:#e8e8e8"></div>
<div class="vl" style="left:959px;top:0;height:21px;background:#e8e8e8"></div>
<div class="vl" style="left:1064px;top:0;height:21px;background:#e8e8e8"></div>
<div class="vl" style="left:1139px;top:0;height:21px;background:#e8e8e8"></div>
<div class="vl" style="left:1234px;top:0;height:21px;background:#e8e8e8"></div>
<div class="vl" style="left:1374px;top:0;height:21px;background:#e8e8e8"></div>
<div class="vl" style="left:1459px;top:0;height:21px;background:#e8e8e8"></div>
<div class="cell" style="left:2px;top:4px">201800211<span style="margin-left:10px;letter-spacing:-0.7px;word-spacing:1.8px">W WESSELS</span></div>
<div class="ci" style="left:207px;top:1px;width:35px;height:18px;padding-left:3px;line-height:17px">0</div>
<div class="ci" style="left:292px;top:1px;width:35px;height:18px;padding-left:3px;line-height:17px">01</div>
<div class="ci" style="left:367px;top:1px;width:30px;height:18px;padding-left:3px;line-height:17px">1</div>
<div class="ci" style="left:442px;top:1px;width:35px;height:18px;padding-left:3px;line-height:17px">N</div>
<div class="cell" style="left:517px;top:4px">MS</div>
<div class="ci" style="left:592px;top:1px;width:62px;height:18px;padding-left:2px;line-height:17px;overflow:hidden;word-spacing:1px">N - No</div>
<div class="btn" style="left:635px;top:2px;width:19px;height:16px"><svg width="17" height="14" style="position:absolute;left:0;top:0"><polyline points="5.1,5.4 9.0,9.2 12.9,5.4" fill="none" stroke="#111" stroke-width="1.5"/></svg></div>
<div class="ci" style="left:667px;top:1px;width:70px;height:18px;padding-left:2px;line-height:17px;word-spacing:1px;overflow:hidden;border-right:none;border-radius:3px 0 0 3px">F - First Time</div>
<div class="btn" style="left:737px;top:2px;width:19px;height:16px"><svg width="17" height="14" style="position:absolute;left:0;top:0"><polyline points="5.1,5.4 9.0,9.2 12.9,5.4" fill="none" stroke="#111" stroke-width="1.5"/></svg></div>
<div class="ci" style="left:772px;top:1px;width:71px;height:18px;padding-left:2px;line-height:17px;overflow:hidden;word-spacing:1px">T - Term</div>
<div class="btn" style="left:824px;top:2px;width:19px;height:16px"><svg width="17" height="14" style="position:absolute;left:0;top:0"><polyline points="5.1,5.4 9.0,9.2 12.9,5.4" fill="none" stroke="#111" stroke-width="1.5"/></svg></div>
<div class="ci" style="left:857px;top:2px;width:78px;height:17px;padding-left:3px;line-height:17px">01-Jan-2019</div>
<svg class="ab" style="left:937px;top:0px" width="17" height="17" viewBox="0 0 17 17"><rect x="1.5" y="2.5" width="9" height="10" fill="#f4f4ff" stroke="#3c3f78" stroke-width="1.1"/><line x1="3.5" y1="0.8" x2="3.5" y2="4" stroke="#3c3f78" stroke-width="1"/><line x1="8.5" y1="0.8" x2="8.5" y2="4" stroke="#3c3f78" stroke-width="1"/><path d="M4.2 6 Q5.5 4.3 6.9 5.6 Q7.4 6.8 5 9" fill="none" stroke="#222" stroke-width="1.1"/><circle cx="11.5" cy="11.5" r="4.4" fill="#fbe3c8" stroke="#8b1a1a" stroke-width="1.3"/><path d="M11.3 9 V11.8 H13.6" fill="none" stroke="#111" stroke-width="1.1"/></svg>
<div class="ci" style="left:962px;top:2px;width:78px;height:17px;padding-left:3px;line-height:17px">31-Dec-2019</div>
<svg class="ab" style="left:1042px;top:0px" width="17" height="17" viewBox="0 0 17 17"><rect x="1.5" y="2.5" width="9" height="10" fill="#f4f4ff" stroke="#3c3f78" stroke-width="1.1"/><line x1="3.5" y1="0.8" x2="3.5" y2="4" stroke="#3c3f78" stroke-width="1"/><line x1="8.5" y1="0.8" x2="8.5" y2="4" stroke="#3c3f78" stroke-width="1"/><path d="M4.2 6 Q5.5 4.3 6.9 5.6 Q7.4 6.8 5 9" fill="none" stroke="#222" stroke-width="1.1"/><circle cx="11.5" cy="11.5" r="4.4" fill="#fbe3c8" stroke="#8b1a1a" stroke-width="1.3"/><path d="M11.3 9 V11.8 H13.6" fill="none" stroke="#111" stroke-width="1.1"/></svg>
<div class="ci" style="left:1067px;top:1px;width:45px;height:18px;padding-left:3px;line-height:17px"></div>
</div>
<div class="ab" style="left:25px;top:384px;width:1594px;height:21px;background:#fff">
<div class="hl" style="left:0;top:20px;width:1594px;background:#e6e6e6"></div>
<div class="vl" style="left:204px;top:0;height:21px;background:#e8e8e8"></div>
<div class="vl" style="left:289px;top:0;height:21px;background:#e8e8e8"></div>
<div class="vl" style="left:364px;top:0;height:21px;background:#e8e8e8"></div>
<div class="vl" style="left:439px;top:0;height:21px;background:#e8e8e8"></div>
<div class="vl" style="left:514px;top:0;height:21px;background:#e8e8e8"></div>
<div class="vl" style="left:589px;top:0;height:21px;background:#e8e8e8"></div>
<div class="vl" style="left:664px;top:0;height:21px;background:#e8e8e8"></div>
<div class="vl" style="left:769px;top:0;height:21px;background:#e8e8e8"></div>
<div class="vl" style="left:854px;top:0;height:21px;background:#e8e8e8"></div>
<div class="vl" style="left:959px;top:0;height:21px;background:#e8e8e8"></div>
<div class="vl" style="left:1064px;top:0;height:21px;background:#e8e8e8"></div>
<div class="vl" style="left:1139px;top:0;height:21px;background:#e8e8e8"></div>
<div class="vl" style="left:1234px;top:0;height:21px;background:#e8e8e8"></div>
<div class="vl" style="left:1374px;top:0;height:21px;background:#e8e8e8"></div>
<div class="vl" style="left:1459px;top:0;height:21px;background:#e8e8e8"></div>
<div class="cell" style="left:2px;top:4px">201800224<span style="margin-left:10px;letter-spacing:-0.7px;word-spacing:1.8px">K KROUWKAMP</span></div>
<div class="ci" style="left:207px;top:1px;width:35px;height:18px;padding-left:3px;line-height:17px">0</div>
<div class="ci" style="left:292px;top:1px;width:35px;height:18px;padding-left:3px;line-height:17px">01</div>
<div class="ci" style="left:367px;top:1px;width:30px;height:18px;padding-left:3px;line-height:17px">1</div>
<div class="ci" style="left:442px;top:1px;width:35px;height:18px;padding-left:3px;line-height:17px">WW</div>
<div class="cell" style="left:517px;top:4px">MS</div>
<div class="ci" style="left:592px;top:1px;width:62px;height:18px;padding-left:2px;line-height:17px;overflow:hidden;word-spacing:1px">N - No</div>
<div class="btn" style="left:635px;top:2px;width:19px;height:16px"><svg width="17" height="14" style="position:absolute;left:0;top:0"><polyline points="5.1,5.4 9.0,9.2 12.9,5.4" fill="none" stroke="#111" stroke-width="1.5"/></svg></div>
<div class="ci" style="left:667px;top:1px;width:70px;height:18px;padding-left:2px;line-height:17px;word-spacing:1px;overflow:hidden;border-right:none;border-radius:3px 0 0 3px">F - First Time</div>
<div class="btn" style="left:737px;top:2px;width:19px;height:16px"><svg width="17" height="14" style="position:absolute;left:0;top:0"><polyline points="5.1,5.4 9.0,9.2 12.9,5.4" fill="none" stroke="#111" stroke-width="1.5"/></svg></div>
<div class="ci" style="left:772px;top:1px;width:71px;height:18px;padding-left:2px;line-height:17px;overflow:hidden;word-spacing:1px">T - Term</div>
<div class="btn" style="left:824px;top:2px;width:19px;height:16px"><svg width="17" height="14" style="position:absolute;left:0;top:0"><polyline points="5.1,5.4 9.0,9.2 12.9,5.4" fill="none" stroke="#111" stroke-width="1.5"/></svg></div>
<div class="ci" style="left:857px;top:2px;width:78px;height:17px;padding-left:3px;line-height:17px">01-Jan-2019</div>
<svg class="ab" style="left:937px;top:0px" width="17" height="17" viewBox="0 0 17 17"><rect x="1.5" y="2.5" width="9" height="10" fill="#f4f4ff" stroke="#3c3f78" stroke-width="1.1"/><line x1="3.5" y1="0.8" x2="3.5" y2="4" stroke="#3c3f78" stroke-width="1"/><line x1="8.5" y1="0.8" x2="8.5" y2="4" stroke="#3c3f78" stroke-width="1"/><path d="M4.2 6 Q5.5 4.3 6.9 5.6 Q7.4 6.8 5 9" fill="none" stroke="#222" stroke-width="1.1"/><circle cx="11.5" cy="11.5" r="4.4" fill="#fbe3c8" stroke="#8b1a1a" stroke-width="1.3"/><path d="M11.3 9 V11.8 H13.6" fill="none" stroke="#111" stroke-width="1.1"/></svg>
<div class="ci" style="left:962px;top:2px;width:78px;height:17px;padding-left:3px;line-height:17px">31-Dec-2019</div>
<svg class="ab" style="left:1042px;top:0px" width="17" height="17" viewBox="0 0 17 17"><rect x="1.5" y="2.5" width="9" height="10" fill="#f4f4ff" stroke="#3c3f78" stroke-width="1.1"/><line x1="3.5" y1="0.8" x2="3.5" y2="4" stroke="#3c3f78" stroke-width="1"/><line x1="8.5" y1="0.8" x2="8.5" y2="4" stroke="#3c3f78" stroke-width="1"/><path d="M4.2 6 Q5.5 4.3 6.9 5.6 Q7.4 6.8 5 9" fill="none" stroke="#222" stroke-width="1.1"/><circle cx="11.5" cy="11.5" r="4.4" fill="#fbe3c8" stroke="#8b1a1a" stroke-width="1.3"/><path d="M11.3 9 V11.8 H13.6" fill="none" stroke="#111" stroke-width="1.1"/></svg>
<div class="ci" style="left:1067px;top:1px;width:45px;height:18px;padding-left:3px;line-height:17px">MAGD</div>
<div class="ci" style="left:1142px;top:1px;width:70px;height:18px;padding-left:3px;line-height:17px">680424</div>
<div class="ci" style="left:1237px;top:1px;width:99px;height:18px;padding-left:3px;line-height:17px"></div>
<div class="ci" style="left:1377px;top:1px;width:50px;height:18px;padding-left:3px;line-height:17px">39393</div>
<div class="ci" style="left:1462px;top:1px;width:99px;height:18px;padding-left:3px;line-height:17px">12345</div>
</div>
<div class="ab" style="left:25px;top:405px;width:1594px;height:21px;background:#fff">
<div class="hl" style="left:0;top:20px;width:1594px;background:#e6e6e6"></div>
<div class="vl" style="left:204px;top:0;height:21px;background:#e8e8e8"></div>
<div class="vl" style="left:289px;top:0;height:21px;background:#e8e8e8"></div>
<div class="vl" style="left:364px;top:0;height:21px;background:#e8e8e8"></div>
<div class="vl" style="left:439px;top:0;height:21px;background:#e8e8e8"></div>
<div class="vl" style="left:514px;top:0;height:21px;background:#e8e8e8"></div>
<div class="vl" style="left:589px;top:0;height:21px;background:#e8e8e8"></div>
<div class="vl" style="left:664px;top:0;height:21px;background:#e8e8e8"></div>
<div class="vl" style="left:769px;top:0;height:21px;background:#e8e8e8"></div>
<div class="vl" style="left:854px;top:0;height:21px;background:#e8e8e8"></div>
<div class="vl" style="left:959px;top:0;height:21px;background:#e8e8e8"></div>
<div class="vl" style="left:1064px;top:0;height:21px;background:#e8e8e8"></div>
<div class="vl" style="left:1139px;top:0;height:21px;background:#e8e8e8"></div>
<div class="vl" style="left:1234px;top:0;height:21px;background:#e8e8e8"></div>
<div class="vl" style="left:1374px;top:0;height:21px;background:#e8e8e8"></div>
<div class="vl" style="left:1459px;top:0;height:21px;background:#e8e8e8"></div>
<div class="cell" style="left:2px;top:4px">201800247<span style="margin-left:10px;letter-spacing:-0.7px;word-spacing:1.8px">H JONKER</span></div>
<div class="ci" style="left:207px;top:1px;width:35px;height:18px;padding-left:3px;line-height:17px">0</div>
<div class="ci" style="left:292px;top:1px;width:35px;height:18px;padding-left:3px;line-height:17px">01</div>
<div class="ci" style="left:367px;top:1px;width:30px;height:18px;padding-left:3px;line-height:17px">1</div>
<div class="ci" style="left:442px;top:1px;width:35px;height:18px;padding-left:3px;line-height:17px">WW</div>
<div class="cell" style="left:517px;top:4px">MS</div>
<div class="ci" style="left:592px;top:1px;width:62px;height:18px;padding-left:2px;line-height:17px;overflow:hidden;word-spacing:1px">N - No</div>
<div class="btn" style="left:635px;top:2px;width:19px;height:16px"><svg width="17" height="14" style="position:absolute;left:0;top:0"><polyline points="5.1,5.4 9.0,9.2 12.9,5.4" fill="none" stroke="#111" stroke-width="1.5"/></svg></div>
<div class="ci" style="left:667px;top:1px;width:70px;height:18px;padding-left:2px;line-height:17px;word-spacing:1px;overflow:hidden;border-right:none;border-radius:3px 0 0 3px">N - Non-Enter</div>
<div class="btn" style="left:737px;top:2px;width:19px;height:16px"><svg width="17" height="14" style="position:absolute;left:0;top:0"><polyline points="5.1,5.4 9.0,9.2 12.9,5.4" fill="none" stroke="#111" stroke-width="1.5"/></svg></div>
<div class="ci" style="left:772px;top:1px;width:71px;height:18px;padding-left:2px;line-height:17px;overflow:hidden;word-spacing:1px">T - Term</div>
<div class="btn" style="left:824px;top:2px;width:19px;height:16px"><svg width="17" height="14" style="position:absolute;left:0;top:0"><polyline points="5.1,5.4 9.0,9.2 12.9,5.4" fill="none" stroke="#111" stroke-width="1.5"/></svg></div>
<div class="ci" style="left:857px;top:2px;width:78px;height:17px;padding-left:3px;line-height:17px">01-Jan-2019</div>
<svg class="ab" style="left:937px;top:0px" width="17" height="17" viewBox="0 0 17 17"><rect x="1.5" y="2.5" width="9" height="10" fill="#f4f4ff" stroke="#3c3f78" stroke-width="1.1"/><line x1="3.5" y1="0.8" x2="3.5" y2="4" stroke="#3c3f78" stroke-width="1"/><line x1="8.5" y1="0.8" x2="8.5" y2="4" stroke="#3c3f78" stroke-width="1"/><path d="M4.2 6 Q5.5 4.3 6.9 5.6 Q7.4 6.8 5 9" fill="none" stroke="#222" stroke-width="1.1"/><circle cx="11.5" cy="11.5" r="4.4" fill="#fbe3c8" stroke="#8b1a1a" stroke-width="1.3"/><path d="M11.3 9 V11.8 H13.6" fill="none" stroke="#111" stroke-width="1.1"/></svg>
<div class="ci" style="left:962px;top:2px;width:78px;height:17px;padding-left:3px;line-height:17px">31-Dec-2019</div>
<svg class="ab" style="left:1042px;top:0px" width="17" height="17" viewBox="0 0 17 17"><rect x="1.5" y="2.5" width="9" height="10" fill="#f4f4ff" stroke="#3c3f78" stroke-width="1.1"/><line x1="3.5" y1="0.8" x2="3.5" y2="4" stroke="#3c3f78" stroke-width="1"/><line x1="8.5" y1="0.8" x2="8.5" y2="4" stroke="#3c3f78" stroke-width="1"/><path d="M4.2 6 Q5.5 4.3 6.9 5.6 Q7.4 6.8 5 9" fill="none" stroke="#222" stroke-width="1.1"/><circle cx="11.5" cy="11.5" r="4.4" fill="#fbe3c8" stroke="#8b1a1a" stroke-width="1.3"/><path d="M11.3 9 V11.8 H13.6" fill="none" stroke="#111" stroke-width="1.1"/></svg>
<div class="ci" style="left:1067px;top:1px;width:45px;height:18px;padding-left:3px;line-height:17px">MAGD</div>
<div class="ci" style="left:1142px;top:1px;width:70px;height:18px;padding-left:3px;line-height:17px">680424</div>
<div class="ci" style="left:1237px;top:1px;width:99px;height:18px;padding-left:3px;line-height:17px"></div>
<div class="ci" style="left:1377px;top:1px;width:50px;height:18px;padding-left:3px;line-height:17px">39393</div>
<div class="ci" style="left:1462px;top:1px;width:99px;height:18px;padding-left:3px;line-height:17px">1234567</div>
</div>
<div class="ab" style="left:25px;top:426px;width:1594px;height:21px;background:#fff">
<div class="hl" style="left:0;top:20px;width:1594px;background:#e6e6e6"></div>
<div class="vl" style="left:204px;top:0;height:21px;background:#e8e8e8"></div>
<div class="vl" style="left:289px;top:0;height:21px;background:#e8e8e8"></div>
<div class="vl" style="left:364px;top:0;height:21px;background:#e8e8e8"></div>
<div class="vl" style="left:439px;top:0;height:21px;background:#e8e8e8"></div>
<div class="vl" style="left:514px;top:0;height:21px;background:#e8e8e8"></div>
<div class="vl" style="left:589px;top:0;height:21px;background:#e8e8e8"></div>
<div class="vl" style="left:664px;top:0;height:21px;background:#e8e8e8"></div>
<div class="vl" style="left:769px;top:0;height:21px;background:#e8e8e8"></div>
<div class="vl" style="left:854px;top:0;height:21px;background:#e8e8e8"></div>
<div class="vl" style="left:959px;top:0;height:21px;background:#e8e8e8"></div>
<div class="vl" style="left:1064px;top:0;height:21px;background:#e8e8e8"></div>
<div class="vl" style="left:1139px;top:0;height:21px;background:#e8e8e8"></div>
<div class="vl" style="left:1234px;top:0;height:21px;background:#e8e8e8"></div>
<div class="vl" style="left:1374px;top:0;height:21px;background:#e8e8e8"></div>
<div class="vl" style="left:1459px;top:0;height:21px;background:#e8e8e8"></div>
<div class="cell" style="left:2px;top:4px">201900009<span style="margin-left:10px;letter-spacing:-0.7px;word-spacing:1.8px">W WILLEMSE</span></div>
<div class="ci" style="left:207px;top:1px;width:35px;height:18px;padding-left:3px;line-height:17px">0</div>
<div class="ci" style="left:292px;top:1px;width:35px;height:18px;padding-left:3px;line-height:17px">01</div>
<div class="ci" style="left:367px;top:1px;width:30px;height:18px;padding-left:3px;line-height:17px">1</div>
<div class="ci" style="left:442px;top:1px;width:35px;height:18px;padding-left:3px;line-height:17px">L</div>
<div class="cell" style="left:517px;top:4px">MS</div>
<div class="ci" style="left:592px;top:1px;width:62px;height:18px;padding-left:2px;line-height:17px;overflow:hidden;word-spacing:1px">N - No</div>
<div class="btn" style="left:635px;top:2px;width:19px;height:16px"><svg width="17" height="14" style="position:absolute;left:0;top:0"><polyline points="5.1,5.4 9.0,9.2 12.9,5.4" fill="none" stroke="#111" stroke-width="1.5"/></svg></div>
<div class="ci" style="left:667px;top:1px;width:70px;height:18px;padding-left:2px;line-height:17px;word-spacing:1px;overflow:hidden;border-right:none;border-radius:3px 0 0 3px">F - First Time</div>
<div class="btn" style="left:737px;top:2px;width:19px;height:16px"><svg width="17" height="14" style="position:absolute;left:0;top:0"><polyline points="5.1,5.4 9.0,9.2 12.9,5.4" fill="none" stroke="#111" stroke-width="1.5"/></svg></div>
<div class="ci" style="left:772px;top:1px;width:71px;height:18px;padding-left:2px;line-height:17px;overflow:hidden;word-spacing:1px">T - Term</div>
<div class="btn" style="left:824px;top:2px;width:19px;height:16px"><svg width="17" height="14" style="position:absolute;left:0;top:0"><polyline points="5.1,5.4 9.0,9.2 12.9,5.4" fill="none" stroke="#111" stroke-width="1.5"/></svg></div>
<div class="ci" style="left:857px;top:2px;width:78px;height:17px;padding-left:3px;line-height:17px">01-Jan-2019</div>
<svg class="ab" style="left:937px;top:0px" width="17" height="17" viewBox="0 0 17 17"><rect x="1.5" y="2.5" width="9" height="10" fill="#f4f4ff" stroke="#3c3f78" stroke-width="1.1"/><line x1="3.5" y1="0.8" x2="3.5" y2="4" stroke="#3c3f78" stroke-width="1"/><line x1="8.5" y1="0.8" x2="8.5" y2="4" stroke="#3c3f78" stroke-width="1"/><path d="M4.2 6 Q5.5 4.3 6.9 5.6 Q7.4 6.8 5 9" fill="none" stroke="#222" stroke-width="1.1"/><circle cx="11.5" cy="11.5" r="4.4" fill="#fbe3c8" stroke="#8b1a1a" stroke-width="1.3"/><path d="M11.3 9 V11.8 H13.6" fill="none" stroke="#111" stroke-width="1.1"/></svg>
<div class="ci" style="left:962px;top:2px;width:78px;height:17px;padding-left:3px;line-height:17px">31-Dec-2019</div>
<svg class="ab" style="left:1042px;top:0px" width="17" height="17" viewBox="0 0 17 17"><rect x="1.5" y="2.5" width="9" height="10" fill="#f4f4ff" stroke="#3c3f78" stroke-width="1.1"/><line x1="3.5" y1="0.8" x2="3.5" y2="4" stroke="#3c3f78" stroke-width="1"/><line x1="8.5" y1="0.8" x2="8.5" y2="4" stroke="#3c3f78" stroke-width="1"/><path d="M4.2 6 Q5.5 4.3 6.9 5.6 Q7.4 6.8 5 9" fill="none" stroke="#222" stroke-width="1.1"/><circle cx="11.5" cy="11.5" r="4.4" fill="#fbe3c8" stroke="#8b1a1a" stroke-width="1.3"/><path d="M11.3 9 V11.8 H13.6" fill="none" stroke="#111" stroke-width="1.1"/></svg>
<div class="ci" style="left:1067px;top:1px;width:45px;height:18px;padding-left:3px;line-height:17px"></div>
</div>
<div class="ab" style="left:25px;top:447px;width:1594px;height:21px;background:#fff">
<div class="hl" style="left:0;top:20px;width:1594px;background:#e6e6e6"></div>
<div class="vl" style="left:204px;top:0;height:21px;background:#e8e8e8"></div>
<div class="vl" style="left:289px;top:0;height:21px;background:#e8e8e8"></div>
<div class="vl" style="left:364px;top:0;height:21px;background:#e8e8e8"></div>
<div class="vl" style="left:439px;top:0;height:21px;background:#e8e8e8"></div>
<div class="vl" style="left:514px;top:0;height:21px;background:#e8e8e8"></div>
<div class="vl" style="left:589px;top:0;height:21px;background:#e8e8e8"></div>
<div class="vl" style="left:664px;top:0;height:21px;background:#e8e8e8"></div>
<div class="vl" style="left:769px;top:0;height:21px;background:#e8e8e8"></div>
<div class="vl" style="left:854px;top:0;height:21px;background:#e8e8e8"></div>
<div class="vl" style="left:959px;top:0;height:21px;background:#e8e8e8"></div>
<div class="vl" style="left:1064px;top:0;height:21px;background:#e8e8e8"></div>
<div class="vl" style="left:1139px;top:0;height:21px;background:#e8e8e8"></div>
<div class="vl" style="left:1234px;top:0;height:21px;background:#e8e8e8"></div>
<div class="vl" style="left:1374px;top:0;height:21px;background:#e8e8e8"></div>
<div class="vl" style="left:1459px;top:0;height:21px;background:#e8e8e8"></div>
<div class="cell" style="left:2px;top:4px">201900010<span style="margin-left:10px;letter-spacing:-0.7px;word-spacing:1.8px">M WILLEMSE</span></div>
<div class="ci" style="left:207px;top:1px;width:35px;height:18px;padding-left:3px;line-height:17px">0</div>
<div class="ci" style="left:292px;top:1px;width:35px;height:18px;padding-left:3px;line-height:17px">01</div>
<div class="ci" style="left:367px;top:1px;width:30px;height:18px;padding-left:3px;line-height:17px">1</div>
<div class="ci" style="left:442px;top:1px;width:35px;height:18px;padding-left:3px;line-height:17px">N</div>
<div class="cell" style="left:517px;top:4px">MS</div>
<div class="ci" style="left:592px;top:1px;width:62px;height:18px;padding-left:2px;line-height:17px;overflow:hidden;word-spacing:1px">N - No</div>
<div class="btn" style="left:635px;top:2px;width:19px;height:16px"><svg width="17" height="14" style="position:absolute;left:0;top:0"><polyline points="5.1,5.4 9.0,9.2 12.9,5.4" fill="none" stroke="#111" stroke-width="1.5"/></svg></div>
<div class="ci" style="left:667px;top:1px;width:70px;height:18px;padding-left:2px;line-height:17px;word-spacing:1px;overflow:hidden;border-right:none;border-radius:3px 0 0 3px">F - First Time</div>
<div class="btn" style="left:737px;top:2px;width:19px;height:16px"><svg width="17" height="14" style="position:absolute;left:0;top:0"><polyline points="5.1,5.4 9.0,9.2 12.9,5.4" fill="none" stroke="#111" stroke-width="1.5"/></svg></div>
<div class="ci" style="left:772px;top:1px;width:71px;height:18px;padding-left:2px;line-height:17px;overflow:hidden;word-spacing:1px">T - Term</div>
<div class="btn" style="left:824px;top:2px;width:19px;height:16px"><svg width="17" height="14" style="position:absolute;left:0;top:0"><polyline points="5.1,5.4 9.0,9.2 12.9,5.4" fill="none" stroke="#111" stroke-width="1.5"/></svg></div>
<div class="ci" style="left:857px;top:2px;width:78px;height:17px;padding-left:3px;line-height:17px">01-Jan-2019</div>
<svg class="ab" style="left:937px;top:0px" width="17" height="17" viewBox="0 0 17 17"><rect x="1.5" y="2.5" width="9" height="10" fill="#f4f4ff" stroke="#3c3f78" stroke-width="1.1"/><line x1="3.5" y1="0.8" x2="3.5" y2="4" stroke="#3c3f78" stroke-width="1"/><line x1="8.5" y1="0.8" x2="8.5" y2="4" stroke="#3c3f78" stroke-width="1"/><path d="M4.2 6 Q5.5 4.3 6.9 5.6 Q7.4 6.8 5 9" fill="none" stroke="#222" stroke-width="1.1"/><circle cx="11.5" cy="11.5" r="4.4" fill="#fbe3c8" stroke="#8b1a1a" stroke-width="1.3"/><path d="M11.3 9 V11.8 H13.6" fill="none" stroke="#111" stroke-width="1.1"/></svg>
<div class="ci" style="left:962px;top:2px;width:78px;height:17px;padding-left:3px;line-height:17px">31-Dec-2019</div>
<svg class="ab" style="left:1042px;top:0px" width="17" height="17" viewBox="0 0 17 17"><rect x="1.5" y="2.5" width="9" height="10" fill="#f4f4ff" stroke="#3c3f78" stroke-width="1.1"/><line x1="3.5" y1="0.8" x2="3.5" y2="4" stroke="#3c3f78" stroke-width="1"/><line x1="8.5" y1="0.8" x2="8.5" y2="4" stroke="#3c3f78" stroke-width="1"/><path d="M4.2 6 Q5.5 4.3 6.9 5.6 Q7.4 6.8 5 9" fill="none" stroke="#222" stroke-width="1.1"/><circle cx="11.5" cy="11.5" r="4.4" fill="#fbe3c8" stroke="#8b1a1a" stroke-width="1.3"/><path d="M11.3 9 V11.8 H13.6" fill="none" stroke="#111" stroke-width="1.1"/></svg>
<div class="ci" style="left:1067px;top:1px;width:45px;height:18px;padding-left:3px;line-height:17px"></div>
</div>
<div class="ab" style="left:25px;top:468px;width:1594px;height:21px;background:#fff">
<div class="hl" style="left:0;top:20px;width:1594px;background:#e6e6e6"></div>
<div class="vl" style="left:204px;top:0;height:21px;background:#e8e8e8"></div>
<div class="vl" style="left:289px;top:0;height:21px;background:#e8e8e8"></div>
<div class="vl" style="left:364px;top:0;height:21px;background:#e8e8e8"></div>
<div class="vl" style="left:439px;top:0;height:21px;background:#e8e8e8"></div>
<div class="vl" style="left:514px;top:0;height:21px;background:#e8e8e8"></div>
<div class="vl" style="left:589px;top:0;height:21px;background:#e8e8e8"></div>
<div class="vl" style="left:664px;top:0;height:21px;background:#e8e8e8"></div>
<div class="vl" style="left:769px;top:0;height:21px;background:#e8e8e8"></div>
<div class="vl" style="left:854px;top:0;height:21px;background:#e8e8e8"></div>
<div class="vl" style="left:959px;top:0;height:21px;background:#e8e8e8"></div>
<div class="vl" style="left:1064px;top:0;height:21px;background:#e8e8e8"></div>
<div class="vl" style="left:1139px;top:0;height:21px;background:#e8e8e8"></div>
<div class="vl" style="left:1234px;top:0;height:21px;background:#e8e8e8"></div>
<div class="vl" style="left:1374px;top:0;height:21px;background:#e8e8e8"></div>
<div class="vl" style="left:1459px;top:0;height:21px;background:#e8e8e8"></div>
<div class="cell" style="left:2px;top:4px">201900013<span style="margin-left:10px;letter-spacing:-0.7px;word-spacing:1.8px">M VENTER</span></div>
<div class="ci" style="left:207px;top:1px;width:35px;height:18px;padding-left:3px;line-height:17px">0</div>
<div class="ci" style="left:292px;top:1px;width:35px;height:18px;padding-left:3px;line-height:17px">01</div>
<div class="ci" style="left:367px;top:1px;width:30px;height:18px;padding-left:3px;line-height:17px">1</div>
<div class="ci" style="left:442px;top:1px;width:35px;height:18px;padding-left:3px;line-height:17px">N</div>
<div class="cell" style="left:517px;top:4px">MS</div>
<div class="ci" style="left:592px;top:1px;width:62px;height:18px;padding-left:2px;line-height:17px;overflow:hidden;word-spacing:1px">N - No</div>
<div class="btn" style="left:635px;top:2px;width:19px;height:16px"><svg width="17" height="14" style="position:absolute;left:0;top:0"><polyline points="5.1,5.4 9.0,9.2 12.9,5.4" fill="none" stroke="#111" stroke-width="1.5"/></svg></div>
<div class="ci" style="left:667px;top:1px;width:70px;height:18px;padding-left:2px;line-height:17px;word-spacing:1px;overflow:hidden;border-right:none;border-radius:3px 0 0 3px">F - First Time</div>
<div class="btn" style="left:737px;top:2px;width:19px;height:16px"><svg width="17" height="14" style="position:absolute;left:0;top:0"><polyline points="5.1,5.4 9.0,9.2 12.9,5.4" fill="none" stroke="#111" stroke-width="1.5"/></svg></div>
<div class="ci" style="left:772px;top:1px;width:71px;height:18px;padding-left:2px;line-height:17px;overflow:hidden;word-spacing:1px">T - Term</div>
<div class="btn" style="left:824px;top:2px;width:19px;height:16px"><svg width="17" height="14" style="position:absolute;left:0;top:0"><polyline points="5.1,5.4 9.0,9.2 12.9,5.4" fill="none" stroke="#111" stroke-width="1.5"/></svg></div>
<div class="ci" style="left:857px;top:2px;width:78px;height:17px;padding-left:3px;line-height:17px">01-Jan-2019</div>
<svg class="ab" style="left:937px;top:0px" width="17" height="17" viewBox="0 0 17 17"><rect x="1.5" y="2.5" width="9" height="10" fill="#f4f4ff" stroke="#3c3f78" stroke-width="1.1"/><line x1="3.5" y1="0.8" x2="3.5" y2="4" stroke="#3c3f78" stroke-width="1"/><line x1="8.5" y1="0.8" x2="8.5" y2="4" stroke="#3c3f78" stroke-width="1"/><path d="M4.2 6 Q5.5 4.3 6.9 5.6 Q7.4 6.8 5 9" fill="none" stroke="#222" stroke-width="1.1"/><circle cx="11.5" cy="11.5" r="4.4" fill="#fbe3c8" stroke="#8b1a1a" stroke-width="1.3"/><path d="M11.3 9 V11.8 H13.6" fill="none" stroke="#111" stroke-width="1.1"/></svg>
<div class="ci" style="left:962px;top:2px;width:78px;height:17px;padding-left:3px;line-height:17px">31-Dec-2019</div>
<svg class="ab" style="left:1042px;top:0px" width="17" height="17" viewBox="0 0 17 17"><rect x="1.5" y="2.5" width="9" height="10" fill="#f4f4ff" stroke="#3c3f78" stroke-width="1.1"/><line x1="3.5" y1="0.8" x2="3.5" y2="4" stroke="#3c3f78" stroke-width="1"/><line x1="8.5" y1="0.8" x2="8.5" y2="4" stroke="#3c3f78" stroke-width="1"/><path d="M4.2 6 Q5.5 4.3 6.9 5.6 Q7.4 6.8 5 9" fill="none" stroke="#222" stroke-width="1.1"/><circle cx="11.5" cy="11.5" r="4.4" fill="#fbe3c8" stroke="#8b1a1a" stroke-width="1.3"/><path d="M11.3 9 V11.8 H13.6" fill="none" stroke="#111" stroke-width="1.1"/></svg>
<div class="ci" style="left:1067px;top:1px;width:45px;height:18px;padding-left:3px;line-height:17px"></div>
</div>
<div class="ab" style="left:25px;top:489px;width:1594px;height:21px;background:#fff">
<div class="hl" style="left:0;top:20px;width:1594px;background:#e6e6e6"></div>
<div class="vl" style="left:204px;top:0;height:21px;background:#e8e8e8"></div>
<div class="vl" style="left:289px;top:0;height:21px;background:#e8e8e8"></div>
<div class="vl" style="left:364px;top:0;height:21px;background:#e8e8e8"></div>
<div class="vl" style="left:439px;top:0;height:21px;background:#e8e8e8"></div>
<div class="vl" style="left:514px;top:0;height:21px;background:#e8e8e8"></div>
<div class="vl" style="left:589px;top:0;height:21px;background:#e8e8e8"></div>
<div class="vl" style="left:664px;top:0;height:21px;background:#e8e8e8"></div>
<div class="vl" style="left:769px;top:0;height:21px;background:#e8e8e8"></div>
<div class="vl" style="left:854px;top:0;height:21px;background:#e8e8e8"></div>
<div class="vl" style="left:959px;top:0;height:21px;background:#e8e8e8"></div>
<div class="vl" style="left:1064px;top:0;height:21px;background:#e8e8e8"></div>
<div class="vl" style="left:1139px;top:0;height:21px;background:#e8e8e8"></div>
<div class="vl" style="left:1234px;top:0;height:21px;background:#e8e8e8"></div>
<div class="vl" style="left:1374px;top:0;height:21px;background:#e8e8e8"></div>
<div class="vl" style="left:1459px;top:0;height:21px;background:#e8e8e8"></div>
<div class="cell" style="left:2px;top:4px">201900020<span style="margin-left:10px;letter-spacing:-0.7px;word-spacing:1.8px">J JANNEMAN</span></div>
<div class="ci" style="left:207px;top:1px;width:35px;height:18px;padding-left:3px;line-height:17px">0</div>
<div class="ci" style="left:292px;top:1px;width:35px;height:18px;padding-left:3px;line-height:17px">01</div>
<div class="ci" style="left:367px;top:1px;width:30px;height:18px;padding-left:3px;line-height:17px">1</div>
<div class="ci" style="left:442px;top:1px;width:35px;height:18px;padding-left:3px;line-height:17px">N</div>
<div class="cell" style="left:517px;top:4px">MS</div>
<div class="ci" style="left:592px;top:1px;width:62px;height:18px;padding-left:2px;line-height:17px;overflow:hidden;word-spacing:1px">N - No</div>
<div class="btn" style="left:635px;top:2px;width:19px;height:16px"><svg width="17" height="14" style="position:absolute;left:0;top:0"><polyline points="5.1,5.4 9.0,9.2 12.9,5.4" fill="none" stroke="#111" stroke-width="1.5"/></svg></div>
<div class="ci" style="left:667px;top:1px;width:70px;height:18px;padding-left:2px;line-height:17px;word-spacing:1px;overflow:hidden;border-right:none;border-radius:3px 0 0 3px">F - First Time</div>
<div class="btn" style="left:737px;top:2px;width:19px;height:16px"><svg width="17" height="14" style="position:absolute;left:0;top:0"><polyline points="5.1,5.4 9.0,9.2 12.9,5.4" fill="none" stroke="#111" stroke-width="1.5"/></svg></div>
<div class="ci" style="left:772px;top:1px;width:71px;height:18px;padding-left:2px;line-height:17px;overflow:hidden;word-spacing:1px">T - Term</div>
<div class="btn" style="left:824px;top:2px;width:19px;height:16px"><svg width="17" height="14" style="position:absolute;left:0;top:0"><polyline points="5.1,5.4 9.0,9.2 12.9,5.4" fill="none" stroke="#111" stroke-width="1.5"/></svg></div>
<div class="ci" style="left:857px;top:2px;width:78px;height:17px;padding-left:3px;line-height:17px">01-Jan-2019</div>
<svg class="ab" style="left:937px;top:0px" width="17" height="17" viewBox="0 0 17 17"><rect x="1.5" y="2.5" width="9" height="10" fill="#f4f4ff" stroke="#3c3f78" stroke-width="1.1"/><line x1="3.5" y1="0.8" x2="3.5" y2="4" stroke="#3c3f78" stroke-width="1"/><line x1="8.5" y1="0.8" x2="8.5" y2="4" stroke="#3c3f78" stroke-width="1"/><path d="M4.2 6 Q5.5 4.3 6.9 5.6 Q7.4 6.8 5 9" fill="none" stroke="#222" stroke-width="1.1"/><circle cx="11.5" cy="11.5" r="4.4" fill="#fbe3c8" stroke="#8b1a1a" stroke-width="1.3"/><path d="M11.3 9 V11.8 H13.6" fill="none" stroke="#111" stroke-width="1.1"/></svg>
<div class="ci" style="left:962px;top:2px;width:78px;height:17px;padding-left:3px;line-height:17px">31-Dec-2019</div>
<svg class="ab" style="left:1042px;top:0px" width="17" height="17" viewBox="0 0 17 17"><rect x="1.5" y="2.5" width="9" height="10" fill="#f4f4ff" stroke="#3c3f78" stroke-width="1.1"/><line x1="3.5" y1="0.8" x2="3.5" y2="4" stroke="#3c3f78" stroke-width="1"/><line x1="8.5" y1="0.8" x2="8.5" y2="4" stroke="#3c3f78" stroke-width="1"/><path d="M4.2 6 Q5.5 4.3 6.9 5.6 Q7.4 6.8 5 9" fill="none" stroke="#222" stroke-width="1.1"/><circle cx="11.5" cy="11.5" r="4.4" fill="#fbe3c8" stroke="#8b1a1a" stroke-width="1.3"/><path d="M11.3 9 V11.8 H13.6" fill="none" stroke="#111" stroke-width="1.1"/></svg>
<div class="ci" style="left:1067px;top:1px;width:45px;height:18px;padding-left:3px;line-height:17px"></div>
</div>
<div class="ab" style="left:25px;top:510px;width:1594px;height:21px;background:#fff">
<div class="hl" style="left:0;top:20px;width:1594px;background:#e6e6e6"></div>
<div class="vl" style="left:204px;top:0;height:21px;background:#e8e8e8"></div>
<div class="vl" style="left:289px;top:0;height:21px;background:#e8e8e8"></div>
<div class="vl" style="left:364px;top:0;height:21px;background:#e8e8e8"></div>
<div class="vl" style="left:439px;top:0;height:21px;background:#e8e8e8"></div>
<div class="vl" style="left:514px;top:0;height:21px;background:#e8e8e8"></div>
<div class="vl" style="left:589px;top:0;height:21px;background:#e8e8e8"></div>
<div class="vl" style="left:664px;top:0;height:21px;background:#e8e8e8"></div>
<div class="vl" style="left:769px;top:0;height:21px;background:#e8e8e8"></div>
<div class="vl" style="left:854px;top:0;height:21px;background:#e8e8e8"></div>
<div class="vl" style="left:959px;top:0;height:21px;background:#e8e8e8"></div>
<div class="vl" style="left:1064px;top:0;height:21px;background:#e8e8e8"></div>
<div class="vl" style="left:1139px;top:0;height:21px;background:#e8e8e8"></div>
<div class="vl" style="left:1234px;top:0;height:21px;background:#e8e8e8"></div>
<div class="vl" style="left:1374px;top:0;height:21px;background:#e8e8e8"></div>
<div class="vl" style="left:1459px;top:0;height:21px;background:#e8e8e8"></div>
<div class="cell" style="left:2px;top:4px">201900022<span style="margin-left:10px;letter-spacing:-0.7px;word-spacing:1.8px">H HANTIE</span></div>
<div class="ci" style="left:207px;top:1px;width:35px;height:18px;padding-left:3px;line-height:17px">0</div>
<div class="ci" style="left:292px;top:1px;width:35px;height:18px;padding-left:3px;line-height:17px">01</div>
<div class="ci" style="left:367px;top:1px;width:30px;height:18px;padding-left:3px;line-height:17px">1</div>
<div class="ci" style="left:442px;top:1px;width:35px;height:18px;padding-left:3px;line-height:17px">N</div>
<div class="cell" style="left:517px;top:4px">MS</div>
<div class="ci" style="left:592px;top:1px;width:62px;height:18px;padding-left:2px;line-height:17px;overflow:hidden;word-spacing:1px">N - No</div>
<div class="btn" style="left:635px;top:2px;width:19px;height:16px"><svg width="17" height="14" style="position:absolute;left:0;top:0"><polyline points="5.1,5.4 9.0,9.2 12.9,5.4" fill="none" stroke="#111" stroke-width="1.5"/></svg></div>
<div class="ci" style="left:667px;top:1px;width:70px;height:18px;padding-left:2px;line-height:17px;word-spacing:1px;overflow:hidden;border-right:none;border-radius:3px 0 0 3px">F - First Time</div>
<div class="btn" style="left:737px;top:2px;width:19px;height:16px"><svg width="17" height="14" style="position:absolute;left:0;top:0"><polyline points="5.1,5.4 9.0,9.2 12.9,5.4" fill="none" stroke="#111" stroke-width="1.5"/></svg></div>
<div class="ci" style="left:772px;top:1px;width:71px;height:18px;padding-left:2px;line-height:17px;overflow:hidden;word-spacing:1px">T - Term</div>
<div class="btn" style="left:824px;top:2px;width:19px;height:16px"><svg width="17" height="14" style="position:absolute;left:0;top:0"><polyline points="5.1,5.4 9.0,9.2 12.9,5.4" fill="none" stroke="#111" stroke-width="1.5"/></svg></div>
<div class="ci" style="left:857px;top:2px;width:78px;height:17px;padding-left:3px;line-height:17px">01-Jan-2019</div>
<svg class="ab" style="left:937px;top:0px" width="17" height="17" viewBox="0 0 17 17"><rect x="1.5" y="2.5" width="9" height="10" fill="#f4f4ff" stroke="#3c3f78" stroke-width="1.1"/><line x1="3.5" y1="0.8" x2="3.5" y2="4" stroke="#3c3f78" stroke-width="1"/><line x1="8.5" y1="0.8" x2="8.5" y2="4" stroke="#3c3f78" stroke-width="1"/><path d="M4.2 6 Q5.5 4.3 6.9 5.6 Q7.4 6.8 5 9" fill="none" stroke="#222" stroke-width="1.1"/><circle cx="11.5" cy="11.5" r="4.4" fill="#fbe3c8" stroke="#8b1a1a" stroke-width="1.3"/><path d="M11.3 9 V11.8 H13.6" fill="none" stroke="#111" stroke-width="1.1"/></svg>
<div class="ci" style="left:962px;top:2px;width:78px;height:17px;padding-left:3px;line-height:17px">31-Dec-2019</div>
<svg class="ab" style="left:1042px;top:0px" width="17" height="17" viewBox="0 0 17 17"><rect x="1.5" y="2.5" width="9" height="10" fill="#f4f4ff" stroke="#3c3f78" stroke-width="1.1"/><line x1="3.5" y1="0.8" x2="3.5" y2="4" stroke="#3c3f78" stroke-width="1"/><line x1="8.5" y1="0.8" x2="8.5" y2="4" stroke="#3c3f78" stroke-width="1"/><path d="M4.2 6 Q5.5 4.3 6.9 5.6 Q7.4 6.8 5 9" fill="none" stroke="#222" stroke-width="1.1"/><circle cx="11.5" cy="11.5" r="4.4" fill="#fbe3c8" stroke="#8b1a1a" stroke-width="1.3"/><path d="M11.3 9 V11.8 H13.6" fill="none" stroke="#111" stroke-width="1.1"/></svg>
<div class="ci" style="left:1067px;top:1px;width:45px;height:18px;padding-left:3px;line-height:17px"></div>
</div>
<div class="ab" style="left:25px;top:531px;width:1594px;height:21px;background:#fff">
<div class="hl" style="left:0;top:20px;width:1594px;background:#e6e6e6"></div>
<div class="vl" style="left:204px;top:0;height:21px;background:#e8e8e8"></div>
<div class="vl" style="left:289px;top:0;height:21px;background:#e8e8e8"></div>
<div class="vl" style="left:364px;top:0;height:21px;background:#e8e8e8"></div>
<div class="vl" style="left:439px;top:0;height:21px;background:#e8e8e8"></div>
<div class="vl" style="left:514px;top:0;height:21px;background:#e8e8e8"></div>
<div class="vl" style="left:589px;top:0;height:21px;background:#e8e8e8"></div>
<div class="vl" style="left:664px;top:0;height:21px;background:#e8e8e8"></div>
<div class="vl" style="left:769px;top:0;height:21px;background:#e8e8e8"></div>
<div class="vl" style="left:854px;top:0;height:21px;background:#e8e8e8"></div>
<div class="vl" style="left:959px;top:0;height:21px;background:#e8e8e8"></div>
<div class="vl" style="left:1064px;top:0;height:21px;background:#e8e8e8"></div>
<div class="vl" style="left:1139px;top:0;height:21px;background:#e8e8e8"></div>
<div class="vl" style="left:1234px;top:0;height:21px;background:#e8e8e8"></div>
<div class="vl" style="left:1374px;top:0;height:21px;background:#e8e8e8"></div>
<div class="vl" style="left:1459px;top:0;height:21px;background:#e8e8e8"></div>
<div class="cell" style="left:2px;top:4px">201900025<span style="margin-left:10px;letter-spacing:-0.7px;word-spacing:1.8px">A PARKS</span></div>
<div class="ci" style="left:207px;top:1px;width:35px;height:18px;padding-left:3px;line-height:17px">0</div>
<div class="ci" style="left:292px;top:1px;width:35px;height:18px;padding-left:3px;line-height:17px">01</div>
<div class="ci" style="left:367px;top:1px;width:30px;height:18px;padding-left:3px;line-height:17px">1</div>
<div class="ci" style="left:442px;top:1px;width:35px;height:18px;padding-left:3px;line-height:17px">N</div>
<div class="cell" style="left:517px;top:4px">MS</div>
<div class="ci" style="left:592px;top:1px;width:62px;height:18px;padding-left:2px;line-height:17px;overflow:hidden;word-spacing:1px">N - No</div>
<div class="btn" style="left:635px;top:2px;width:19px;height:16px"><svg width="17" height="14" style="position:absolute;left:0;top:0"><polyline points="5.1,5.4 9.0,9.2 12.9,5.4" fill="none" stroke="#111" stroke-width="1.5"/></svg></div>
<div class="ci" style="left:667px;top:1px;width:70px;height:18px;padding-left:2px;line-height:17px;word-spacing:1px;overflow:hidden;border-right:none;border-radius:3px 0 0 3px">F - First Time</div>
<div class="btn" style="left:737px;top:2px;width:19px;height:16px"><svg width="17" height="14" style="position:absolute;left:0;top:0"><polyline points="5.1,5.4 9.0,9.2 12.9,5.4" fill="none" stroke="#111" stroke-width="1.5"/></svg></div>
<div class="ci" style="left:772px;top:1px;width:71px;height:18px;padding-left:2px;line-height:17px;overflow:hidden;word-spacing:1px">T - Term</div>
<div class="btn" style="left:824px;top:2px;width:19px;height:16px"><svg width="17" height="14" style="position:absolute;left:0;top:0"><polyline points="5.1,5.4 9.0,9.2 12.9,5.4" fill="none" stroke="#111" stroke-width="1.5"/></svg></div>
<div class="ci" style="left:857px;top:2px;width:78px;height:17px;padding-left:3px;line-height:17px">01-Jan-2019</div>
<svg class="ab" style="left:937px;top:0px" width="17" height="17" viewBox="0 0 17 17"><rect x="1.5" y="2.5" width="9" height="10" fill="#f4f4ff" stroke="#3c3f78" stroke-width="1.1"/><line x1="3.5" y1="0.8" x2="3.5" y2="4" stroke="#3c3f78" stroke-width="1"/><line x1="8.5" y1="0.8" x2="8.5" y2="4" stroke="#3c3f78" stroke-width="1"/><path d="M4.2 6 Q5.5 4.3 6.9 5.6 Q7.4 6.8 5 9" fill="none" stroke="#222" stroke-width="1.1"/><circle cx="11.5" cy="11.5" r="4.4" fill="#fbe3c8" stroke="#8b1a1a" stroke-width="1.3"/><path d="M11.3 9 V11.8 H13.6" fill="none" stroke="#111" stroke-width="1.1"/></svg>
<div class="ci" style="left:962px;top:2px;width:78px;height:17px;padding-left:3px;line-height:17px">31-Dec-2019</div>
<svg class="ab" style="left:1042px;top:0px" width="17" height="17" viewBox="0 0 17 17"><rect x="1.5" y="2.5" width="9" height="10" fill="#f4f4ff" stroke="#3c3f78" stroke-width="1.1"/><line x1="3.5" y1="0.8" x2="3.5" y2="4" stroke="#3c3f78" stroke-width="1"/><line x1="8.5" y1="0.8" x2="8.5" y2="4" stroke="#3c3f78" stroke-width="1"/><path d="M4.2 6 Q5.5 4.3 6.9 5.6 Q7.4 6.8 5 9" fill="none" stroke="#222" stroke-width="1.1"/><circle cx="11.5" cy="11.5" r="4.4" fill="#fbe3c8" stroke="#8b1a1a" stroke-width="1.3"/><path d="M11.3 9 V11.8 H13.6" fill="none" stroke="#111" stroke-width="1.1"/></svg>
<div class="ci" style="left:1067px;top:1px;width:45px;height:18px;padding-left:3px;line-height:17px"></div>
</div>
<div class="ab" style="left:25px;top:552px;width:1594px;height:21px;background:#fff">
<div class="hl" style="left:0;top:20px;width:1594px;background:#e6e6e6"></div>
<div class="vl" style="left:204px;top:0;height:21px;background:#e8e8e8"></div>
<div class="vl" style="left:289px;top:0;height:21px;background:#e8e8e8"></div>
<div class="vl" style="left:364px;top:0;height:21px;background:#e8e8e8"></div>
<div class="vl" style="left:439px;top:0;height:21px;background:#e8e8e8"></div>
<div class="vl" style="left:514px;top:0;height:21px;background:#e8e8e8"></div>
<div class="vl" style="left:589px;top:0;height:21px;background:#e8e8e8"></div>
<div class="vl" style="left:664px;top:0;height:21px;background:#e8e8e8"></div>
<div class="vl" style="left:769px;top:0;height:21px;background:#e8e8e8"></div>
<div class="vl" style="left:854px;top:0;height:21px;background:#e8e8e8"></div>
<div class="vl" style="left:959px;top:0;height:21px;background:#e8e8e8"></div>
<div class="vl" style="left:1064px;top:0;height:21px;background:#e8e8e8"></div>
<div class="vl" style="left:1139px;top:0;height:21px;background:#e8e8e8"></div>
<div class="vl" style="left:1234px;top:0;height:21px;background:#e8e8e8"></div>
<div class="vl" style="left:1374px;top:0;height:21px;background:#e8e8e8"></div>
<div class="vl" style="left:1459px;top:0;height:21px;background:#e8e8e8"></div>
<div class="cell" style="left:2px;top:4px">201900130<span style="margin-left:10px;letter-spacing:-0.7px;word-spacing:1.8px">T MAJA</span></div>
<div class="ci" style="left:207px;top:1px;width:35px;height:18px;padding-left:3px;line-height:17px">0</div>
<div class="ci" style="left:292px;top:1px;width:35px;height:18px;padding-left:3px;line-height:17px">01</div>
<div class="ci" style="left:367px;top:1px;width:30px;height:18px;padding-left:3px;line-height:17px">1</div>
<div class="ci" style="left:442px;top:1px;width:35px;height:18px;padding-left:3px;line-height:17px">N</div>
<div class="cell" style="left:517px;top:4px">S1</div>
<div class="ci" style="left:592px;top:1px;width:62px;height:18px;padding-left:2px;line-height:17px;overflow:hidden;word-spacing:1px">N - No</div>
<div class="btn" style="left:635px;top:2px;width:19px;height:16px"><svg width="17" height="14" style="position:absolute;left:0;top:0"><polyline points="5.1,5.4 9.0,9.2 12.9,5.4" fill="none" stroke="#111" stroke-width="1.5"/></svg></div>
<div class="ci" style="left:667px;top:1px;width:70px;height:18px;padding-left:2px;line-height:17px;word-spacing:1px;overflow:hidden;border-right:none;border-radius:3px 0 0 3px">F - First Time</div>
<div class="btn" style="left:737px;top:2px;width:19px;height:16px"><svg width="17" height="14" style="position:absolute;left:0;top:0"><polyline points="5.1,5.4 9.0,9.2 12.9,5.4" fill="none" stroke="#111" stroke-width="1.5"/></svg></div>
<div class="ci" style="left:772px;top:1px;width:71px;height:18px;padding-left:2px;line-height:17px;overflow:hidden;word-spacing:1px">T - Term</div>
<div class="btn" style="left:824px;top:2px;width:19px;height:16px"><svg width="17" height="14" style="position:absolute;left:0;top:0"><polyline points="5.1,5.4 9.0,9.2 12.9,5.4" fill="none" stroke="#111" stroke-width="1.5"/></svg></div>
<div class="ci" style="left:857px;top:2px;width:78px;height:17px;padding-left:3px;line-height:17px">01-Jan-2019</div>
<svg class="ab" style="left:937px;top:0px" width="17" height="17" viewBox="0 0 17 17"><rect x="1.5" y="2.5" width="9" height="10" fill="#f4f4ff" stroke="#3c3f78" stroke-width="1.1"/><line x1="3.5" y1="0.8" x2="3.5" y2="4" stroke="#3c3f78" stroke-width="1"/><line x1="8.5" y1="0.8" x2="8.5" y2="4" stroke="#3c3f78" stroke-width="1"/><path d="M4.2 6 Q5.5 4.3 6.9 5.6 Q7.4 6.8 5 9" fill="none" stroke="#222" stroke-width="1.1"/><circle cx="11.5" cy="11.5" r="4.4" fill="#fbe3c8" stroke="#8b1a1a" stroke-width="1.3"/><path d="M11.3 9 V11.8 H13.6" fill="none" stroke="#111" stroke-width="1.1"/></svg>
<div class="ci" style="left:962px;top:2px;width:78px;height:17px;padding-left:3px;line-height:17px">31-Dec-2019</div>
<svg class="ab" style="left:1042px;top:0px" width="17" height="17" viewBox="0 0 17 17"><rect x="1.5" y="2.5" width="9" height="10" fill="#f4f4ff" stroke="#3c3f78" stroke-width="1.1"/><line x1="3.5" y1="0.8" x2="3.5" y2="4" stroke="#3c3f78" stroke-width="1"/><line x1="8.5" y1="0.8" x2="8.5" y2="4" stroke="#3c3f78" stroke-width="1"/><path d="M4.2 6 Q5.5 4.3 6.9 5.6 Q7.4 6.8 5 9" fill="none" stroke="#222" stroke-width="1.1"/><circle cx="11.5" cy="11.5" r="4.4" fill="#fbe3c8" stroke="#8b1a1a" stroke-width="1.3"/><path d="M11.3 9 V11.8 H13.6" fill="none" stroke="#111" stroke-width="1.1"/></svg>
<div class="ci" style="left:1067px;top:1px;width:45px;height:18px;padding-left:3px;line-height:17px"></div>
</div>
<div class="ab" style="left:25px;top:573px;width:1594px;height:21px;background:#fff">
<div class="hl" style="left:0;top:20px;width:1594px;background:#e6e6e6"></div>
<div class="vl" style="left:204px;top:0;height:21px;background:#e8e8e8"></div>
<div class="vl" style="left:289px;top:0;height:21px;background:#e8e8e8"></div>
<div class="vl" style="left:364px;top:0;height:21px;background:#e8e8e8"></div>
<div class="vl" style="left:439px;top:0;height:21px;background:#e8e8e8"></div>
<div class="vl" style="left:514px;top:0;height:21px;background:#e8e8e8"></div>
<div class="vl" style="left:589px;top:0;height:21px;background:#e8e8e8"></div>
<div class="vl" style="left:664px;top:0;height:21px;background:#e8e8e8"></div>
<div class="vl" style="left:769px;top:0;height:21px;background:#e8e8e8"></div>
<div class="vl" style="left:854px;top:0;height:21px;background:#e8e8e8"></div>
<div class="vl" style="left:959px;top:0;height:21px;background:#e8e8e8"></div>
<div class="vl" style="left:1064px;top:0;height:21px;background:#e8e8e8"></div>
<div class="vl" style="left:1139px;top:0;height:21px;background:#e8e8e8"></div>
<div class="vl" style="left:1234px;top:0;height:21px;background:#e8e8e8"></div>
<div class="vl" style="left:1374px;top:0;height:21px;background:#e8e8e8"></div>
<div class="vl" style="left:1459px;top:0;height:21px;background:#e8e8e8"></div>
<div class="cell" style="left:2px;top:4px">201900203<span style="margin-left:10px;letter-spacing:-0.7px;word-spacing:1.8px">B BING</span></div>
<div class="ci" style="left:207px;top:1px;width:35px;height:18px;padding-left:3px;line-height:17px">0</div>
<div class="ci" style="left:292px;top:1px;width:35px;height:18px;padding-left:3px;line-height:17px">01</div>
<div class="ci" style="left:367px;top:1px;width:30px;height:18px;padding-left:3px;line-height:17px">1</div>
<div class="ci" style="left:442px;top:1px;width:35px;height:18px;padding-left:3px;line-height:17px">N</div>
<div class="cell" style="left:517px;top:4px">MS</div>
<div class="ci" style="left:592px;top:1px;width:62px;height:18px;padding-left:2px;line-height:17px;overflow:hidden;word-spacing:1px">N - No</div>
<div class="btn" style="left:635px;top:2px;width:19px;height:16px"><svg width="17" height="14" style="position:absolute;left:0;top:0"><polyline points="5.1,5.4 9.0,9.2 12.9,5.4" fill="none" stroke="#111" stroke-width="1.5"/></svg></div>
<div class="ci" style="left:667px;top:1px;width:70px;height:18px;padding-left:2px;line-height:17px;word-spacing:1px;overflow:hidden;border-right:none;border-radius:3px 0 0 3px">F - First Time</div>
<div class="btn" style="left:737px;top:2px;width:19px;height:16px"><svg width="17" height="14" style="position:absolute;left:0;top:0"><polyline points="5.1,5.4 9.0,9.2 12.9,5.4" fill="none" stroke="#111" stroke-width="1.5"/></svg></div>
<div class="ci" style="left:772px;top:1px;width:71px;height:18px;padding-left:2px;line-height:17px;overflow:hidden;word-spacing:1px">T - Term</div>
<div class="btn" style="left:824px;top:2px;width:19px;height:16px"><svg width="17" height="14" style="position:absolute;left:0;top:0"><polyline points="5.1,5.4 9.0,9.2 12.9,5.4" fill="none" stroke="#111" stroke-width="1.5"/></svg></div>
<div class="ci" style="left:857px;top:2px;width:78px;height:17px;padding-left:3px;line-height:17px">01-Jan-2019</div>
<svg class="ab" style="left:937px;top:0px" width="17" height="17" viewBox="0 0 17 17"><rect x="1.5" y="2.5" width="9" height="10" fill="#f4f4ff" stroke="#3c3f78" stroke-width="1.1"/><line x1="3.5" y1="0.8" x2="3.5" y2="4" stroke="#3c3f78" stroke-width="1"/><line x1="8.5" y1="0.8" x2="8.5" y2="4" stroke="#3c3f78" stroke-width="1"/><path d="M4.2 6 Q5.5 4.3 6.9 5.6 Q7.4 6.8 5 9" fill="none" stroke="#222" stroke-width="1.1"/><circle cx="11.5" cy="11.5" r="4.4" fill="#fbe3c8" stroke="#8b1a1a" stroke-width="1.3"/><path d="M11.3 9 V11.8 H13.6" fill="none" stroke="#111" stroke-width="1.1"/></svg>
<div class="ci" style="left:962px;top:2px;width:78px;height:17px;padding-left:3px;line-height:17px">31-Dec-2019</div>
<svg class="ab" style="left:1042px;top:0px" width="17" height="17" viewBox="0 0 17 17"><rect x="1.5" y="2.5" width="9" height="10" fill="#f4f4ff" stroke="#3c3f78" stroke-width="1.1"/><line x1="3.5" y1="0.8" x2="3.5" y2="4" stroke="#3c3f78" stroke-width="1"/><line x1="8.5" y1="0.8" x2="8.5" y2="4" stroke="#3c3f78" stroke-width="1"/><path d="M4.2 6 Q5.5 4.3 6.9 5.6 Q7.4 6.8 5 9" fill="none" stroke="#222" stroke-width="1.1"/><circle cx="11.5" cy="11.5" r="4.4" fill="#fbe3c8" stroke="#8b1a1a" stroke-width="1.3"/><path d="M11.3 9 V11.8 H13.6" fill="none" stroke="#111" stroke-width="1.1"/></svg>
<div class="ci" style="left:1067px;top:1px;width:45px;height:18px;padding-left:3px;line-height:17px"></div>
</div>
<div class="ab" style="left:25px;top:594px;width:1594px;height:21px;background:#fff">
<div class="hl" style="left:0;top:20px;width:1594px;background:#e6e6e6"></div>
<div class="vl" style="left:204px;top:0;height:21px;background:#e8e8e8"></div>
<div class="vl" style="left:289px;top:0;height:21px;background:#e8e8e8"></div>
<div class="vl" style="left:364px;top:0;height:21px;background:#e8e8e8"></div>
<div class="vl" style="left:439px;top:0;height:21px;background:#e8e8e8"></div>
<div class="vl" style="left:514px;top:0;height:21px;background:#e8e8e8"></div>
<div class="vl" style="left:589px;top:0;height:21px;background:#e8e8e8"></div>
<div class="vl" style="left:664px;top:0;height:21px;background:#e8e8e8"></div>
<div class="vl" style="left:769px;top:0;height:21px;background:#e8e8e8"></div>
<div class="vl" style="left:854px;top:0;height:21px;background:#e8e8e8"></div>
<div class="vl" style="left:959px;top:0;height:21px;background:#e8e8e8"></div>
<div class="vl" style="left:1064px;top:0;height:21px;background:#e8e8e8"></div>
<div class="vl" style="left:1139px;top:0;height:21px;background:#e8e8e8"></div>
<div class="vl" style="left:1234px;top:0;height:21px;background:#e8e8e8"></div>
<div class="vl" style="left:1374px;top:0;height:21px;background:#e8e8e8"></div>
<div class="vl" style="left:1459px;top:0;height:21px;background:#e8e8e8"></div>
<div class="cell" style="left:2px;top:4px">201900204<span style="margin-left:10px;letter-spacing:-0.7px;word-spacing:1.8px">T TANK</span></div>
<div class="ci" style="left:207px;top:1px;width:35px;height:18px;padding-left:3px;line-height:17px">0</div>
<div class="ci" style="left:292px;top:1px;width:35px;height:18px;padding-left:3px;line-height:17px">01</div>
<div class="ci" style="left:367px;top:1px;width:30px;height:18px;padding-left:3px;line-height:17px">1</div>
<div class="ci" style="left:442px;top:1px;width:35px;height:18px;padding-left:3px;line-height:17px">N</div>
<div class="cell" style="left:517px;top:4px">MS</div>
<div class="ci" style="left:592px;top:1px;width:62px;height:18px;padding-left:2px;line-height:17px;overflow:hidden;word-spacing:1px">N - No</div>
<div class="btn" style="left:635px;top:2px;width:19px;height:16px"><svg width="17" height="14" style="position:absolute;left:0;top:0"><polyline points="5.1,5.4 9.0,9.2 12.9,5.4" fill="none" stroke="#111" stroke-width="1.5"/></svg></div>
<div class="ci" style="left:667px;top:1px;width:70px;height:18px;padding-left:2px;line-height:17px;word-spacing:1px;overflow:hidden;border-right:none;border-radius:3px 0 0 3px">F - First Time</div>
<div class="btn" style="left:737px;top:2px;width:19px;height:16px"><svg width="17" height="14" style="position:absolute;left:0;top:0"><polyline points="5.1,5.4 9.0,9.2 12.9,5.4" fill="none" stroke="#111" stroke-width="1.5"/></svg></div>
<div class="ci" style="left:772px;top:1px;width:71px;height:18px;padding-left:2px;line-height:17px;overflow:hidden;word-spacing:1px">T - Term</div>
<div class="btn" style="left:824px;top:2px;width:19px;height:16px"><svg width="17" height="14" style="position:absolute;left:0;top:0"><polyline points="5.1,5.4 9.0,9.2 12.9,5.4" fill="none" stroke="#111" stroke-width="1.5"/></svg></div>
<div class="ci" style="left:857px;top:2px;width:78px;height:17px;padding-left:3px;line-height:17px">01-Jan-2019</div>
<svg class="ab" style="left:937px;top:0px" width="17" height="17" viewBox="0 0 17 17"><rect x="1.5" y="2.5" width="9" height="10" fill="#f4f4ff" stroke="#3c3f78" stroke-width="1.1"/><line x1="3.5" y1="0.8" x2="3.5" y2="4" stroke="#3c3f78" stroke-width="1"/><line x1="8.5" y1="0.8" x2="8.5" y2="4" stroke="#3c3f78" stroke-width="1"/><path d="M4.2 6 Q5.5 4.3 6.9 5.6 Q7.4 6.8 5 9" fill="none" stroke="#222" stroke-width="1.1"/><circle cx="11.5" cy="11.5" r="4.4" fill="#fbe3c8" stroke="#8b1a1a" stroke-width="1.3"/><path d="M11.3 9 V11.8 H13.6" fill="none" stroke="#111" stroke-width="1.1"/></svg>
<div class="ci" style="left:962px;top:2px;width:78px;height:17px;padding-left:3px;line-height:17px">31-Dec-2019</div>
<svg class="ab" style="left:1042px;top:0px" width="17" height="17" viewBox="0 0 17 17"><rect x="1.5" y="2.5" width="9" height="10" fill="#f4f4ff" stroke="#3c3f78" stroke-width="1.1"/><line x1="3.5" y1="0.8" x2="3.5" y2="4" stroke="#3c3f78" stroke-width="1"/><line x1="8.5" y1="0.8" x2="8.5" y2="4" stroke="#3c3f78" stroke-width="1"/><path d="M4.2 6 Q5.5 4.3 6.9 5.6 Q7.4 6.8 5 9" fill="none" stroke="#222" stroke-width="1.1"/><circle cx="11.5" cy="11.5" r="4.4" fill="#fbe3c8" stroke="#8b1a1a" stroke-width="1.3"/><path d="M11.3 9 V11.8 H13.6" fill="none" stroke="#111" stroke-width="1.1"/></svg>
<div class="ci" style="left:1067px;top:1px;width:45px;height:18px;padding-left:3px;line-height:17px"></div>
</div>
<div class="ab" style="left:1640px;top:300px;width:17px;height:314px;background:#efefef"></div>
<div class="ab" style="left:1641px;top:334px;width:15px;height:153px;background:#c8c8c8"></div>
<svg class="ab" style="left:1642px;top:316px" width="13" height="11"><polyline points="1.5,9 6.5,3.5 11.5,9" fill="none" stroke="#555" stroke-width="2.2"/></svg>
<svg class="ab" style="left:1642px;top:588px" width="13" height="11"><polyline points="1.5,2 6.5,7.5 11.5,2" fill="none" stroke="#555" stroke-width="2.2"/></svg>
<div class="ab" style="left:0;top:314px;width:2px;height:21px;background:#c6d9ef"></div>
<div class="ab" style="left:0;top:323px;width:2px;height:3px;background:#555"></div>
<div class="ab" style="left:24px;top:615px;width:1634px;height:21px;background:#eff2f9"></div>
<div class="t" style="left:29px;top:620px;color:#444">Columns Hidden</div>
<div class="t" style="left:129px;top:620px;color:#222">11</div>
<div class="vl" style="left:147px;top:617px;height:16px;background:#d8dde4"></div>
<div class="vl" style="left:1634px;top:617px;height:16px;background:#d8dde4"></div>
<div class="t" style="left:1640px;top:620px;color:#222">24</div>
</body></html>
